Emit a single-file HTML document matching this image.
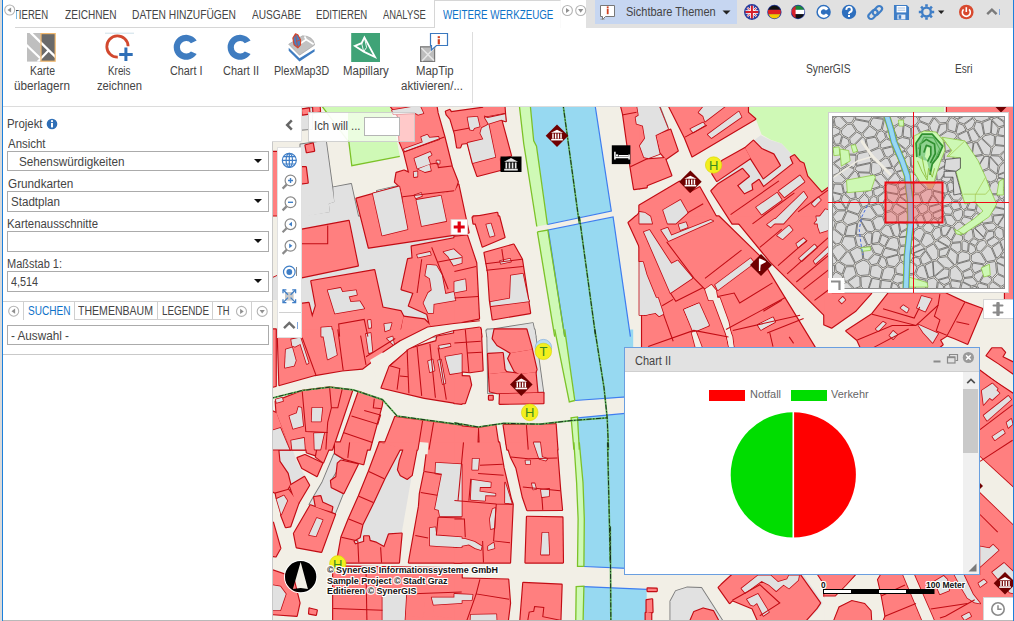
<!DOCTYPE html>
<html lang="de"><head><meta charset="utf-8"><title>WebOffice</title>
<style>
html,body{margin:0;padding:0;background:#fff;}
#app{position:relative;width:1014px;height:621px;overflow:hidden;background:#fff;font-family:"Liberation Sans",sans-serif;color:#444;}
#app div,#app span,#app svg{position:absolute;}
.t{white-space:nowrap;line-height:1;transform-origin:0 0;display:block;}
.box{border:1px solid #ababab;background:#fff;box-sizing:border-box;}
.arr{width:0;height:0;border-left:4px solid transparent;border-right:4px solid transparent;border-top:4px solid #111;}
.halo{text-shadow:-1px 0 0 #fff,1px 0 0 #fff,0 -1px 0 #fff,0 1px 0 #fff,-1px -1px 0 #fff,1px 1px 0 #fff,-1px 1px 0 #fff,1px -1px 0 #fff;}
</style></head><body>
<div id="app">
<div id="map" style="left:273px;top:107px;width:741px;height:514px;overflow:hidden;">
<svg class="mapsvg" style="left:0;top:0" width="741" height="514" viewBox="273 107 741 514">
<rect x="273" y="107" width="741" height="514" fill="#f2efe6"/>
<g fill="#e1e1e1" stroke="#7a7a7a" stroke-width="1.8" stroke-linejoin="round">
<polygon points="300.4,144.4 325.9,140.8 334.3,201.9 328.8,203.7 329.9,211.9 300.4,217.4"/>
<polygon points="333.2,187.3 351.1,184 359.7,223.6 300.4,223.6 300.4,216.5 329.9,211.9 328.8,203.7 334.3,201.9"/>
<polygon points="300.4,109.7 312.2,107.9 312.2,128.9 300.4,129.8"/>
<polygon points="377,190.8 396.5,186.3 401,205.8 377,205.8"/>
<polygon points="639.4,103.4 658.5,103.4 667.6,127.1 655.8,134.4 659.4,152.6 639.4,157.2"/>
<polygon points="300.4,216.4 461.7,216.4 461.7,336.6 300.4,336.6"/>
<polygon points="486.3,330.4 532.8,323.1 535.5,336.6 487.2,336.6"/>
<polygon points="487.2,329.4 534.6,329.4 543.4,393.2 488.1,393.2"/>
<polygon points="334.1,454.2 343.2,459.7 330.5,480.7 331.4,487.1 343.2,493.1 335,513.5 309.5,504.4 314.1,496.2 322.3,482.5"/>
<polygon points="670.4,624.9 670.4,601.2 675.8,591.1 686.8,587.5 701.4,588 725.1,624.9"/>
</g>
<g fill="#e1e1e1">
<polygon points="300.4,144.4 325.9,140.8 334.3,201.9 328.8,203.7 329.9,211.9 300.4,217.4"/>
<polygon points="333.2,187.3 351.1,184 359.7,223.6 300.4,223.6 300.4,216.5 329.9,211.9 328.8,203.7 334.3,201.9"/>
<polygon points="300.4,109.7 312.2,107.9 312.2,128.9 300.4,129.8"/>
<polygon points="377,190.8 396.5,186.3 401,205.8 377,205.8"/>
<polygon points="639.4,103.4 658.5,103.4 667.6,127.1 655.8,134.4 659.4,152.6 639.4,157.2"/>
<polygon points="300.4,216.4 461.7,216.4 461.7,336.6 300.4,336.6"/>
<polygon points="486.3,330.4 532.8,323.1 535.5,336.6 487.2,336.6"/>
<polygon points="487.2,329.4 534.6,329.4 543.4,393.2 488.1,393.2"/>
<polygon points="334.1,454.2 343.2,459.7 330.5,480.7 331.4,487.1 343.2,493.1 335,513.5 309.5,504.4 314.1,496.2 322.3,482.5"/>
<polygon points="670.4,624.9 670.4,601.2 675.8,591.1 686.8,587.5 701.4,588 725.1,624.9"/>
</g>
<g fill="#e1e1e1">
<polygon points="753.4,140.8 760.7,135.3 770.7,140.2 781.7,143.5 791.7,154.4 793.5,163.6 763.4,187.3 758.9,180 752.5,184.5 753.4,190 744.3,194.6 737,185.5 748.8,176.3 742.4,169 717.8,184.5 716.9,180.9 750.6,159 762.5,178.2 779.8,165.4 773.5,154.4 761.6,149"/>
<polygon points="278.5,442.4 290.3,442.4 296.7,461.5 304.9,476.1 290.3,484.3 287.6,473.4 279.4,461.5"/>
<polygon points="400.7,449.6 399.8,460.6 398,469.7 400.7,475.2 407.1,478.8 411.7,476.1 401.6,533.6 388.9,534.5 384.3,547.3 376.1,542.7 369.7,540.9 368.8,536.3 364.2,536.3 364.2,541.8 355.1,544.5 353.3,540.9 359.7,537.2 362.4,524.5 373.3,502.6 384.3,478.8"/>
<polygon points="741.5,589.3 759.8,574.7 803.6,574.7 822.7,603 819.1,608.5 803.6,624.9 759.8,624.9"/>
<polygon points="273,246 279,246 279,300 273,300"/>
</g>
<g fill="#97d9f1">
<polygon points="530.1,103.4 594.8,103.4 611.3,211 567.5,219.9 547.4,224.5 536.5,146.2 533.7,140.8"/>
<polygon points="548.3,230 613.1,216.9 630.4,336.6 564.7,336.6"/>
<polygon points="564.7,329.4 633.2,329.4 633.2,396.9 574.8,400.5"/>
<polygon points="577.5,417.8 633.2,412.7 633.2,449.6 579.3,449.6"/>
<polygon points="579.3,442.4 633.2,442.4 633.2,569 583.9,566.4 584.3,519 583,482.5"/>
<polygon points="583.9,586.6 646.7,589.3 646.7,624.9 583,624.9"/>
</g>
<g fill="#cff9b6">
<polygon points="319.9,103.4 348.9,142.2 351.8,165.7 399.8,156.3 389.8,103.4"/>
<polygon points="519.1,103.4 530.1,103.4 533.7,140.8 536.5,146.2 547.4,224.5 536.8,226.5 523.7,143.5"/>
<polygon points="747,103.4 880.2,103.4 880.2,183.6 821.8,192.8 807.2,176.3 803.6,163.6 792.6,155.3 781.7,143.5 770.7,139.8 761.6,134.4 756.1,119.8 747.9,112.5"/>
<polygon points="537.4,231.9 547.8,230 564.7,336.6 554.7,336.6"/>
<polygon points="554.7,329.4 564.7,329.4 574.8,400.5 569.3,402"/>
<polygon points="571.1,417.8 577.5,416.9 579.3,449.6 573.9,449.6"/>
<polygon points="573.9,442.4 579.3,442.4 583,482.5 584.3,519 583.9,566.4 577.5,566.4 578.1,519 576.6,482.5"/>
<polygon points="576.2,586.6 583.9,586.2 583,624.9 575.7,624.9"/>
<polygon points="828,100 944,100 944,113 828,113"/>
</g>
<g fill="none" stroke="#3f7df0" stroke-width="1.2">
<polyline points="594.8,103.4 611.3,211 547.4,224.5"/>
<polyline points="564.7,336.6 548.3,230 613.1,216.9 630.4,336.6"/>
<polyline points="574.8,400.5 633.2,396.3"/>
<polyline points="577.5,417.8 633.2,412.7"/>
<polyline points="583.9,566.5 633.2,568.7"/>
<polyline points="583.9,586.6 646.7,589.3"/>
</g>
<g fill="none" stroke="#7cc228" stroke-width="1.3">
<polyline points="519.1,103.4 523.7,143.5 536.8,226.5"/>
<polyline points="530.1,103.4 533.7,140.8 536.5,146.2 547.4,224.5"/>
<polyline points="537.4,231.9 554.7,336.6"/>
<polyline points="537.4,231.9 547.8,230 564.7,336.6"/>
<polyline points="554.7,329.4 569.3,402 574.8,400.5"/>
<polyline points="564.7,329.4 574.8,400.5"/>
<polyline points="573.9,449.6 571.1,417.8 577.5,416.9 579.3,449.6"/>
<polyline points="573.9,442.4 576.6,482.5 578.1,519 577.5,566.4 583.9,566.4"/>
<polyline points="579.3,442.4 583,482.5 584.3,519 583.9,566.4"/>
<polyline points="575.7,624.9 576.2,586.6 583.9,586.2 583,624.9"/>
<polyline points="319.9,103.4 348.9,142.2 351.8,165.7 399.8,156.3"/>
</g>
<g fill="#ff7f7f" stroke="#c20c14" stroke-width="2.3" stroke-linejoin="round">
<polygon points="305.5,145.3 312.8,143.5 314.1,150.8 306.8,152.2"/>
<polygon points="300.4,167.2 305.8,167.2 307.7,182.7 300.4,183.6"/>
<polygon points="389,104 436.1,104 437.6,113 444.4,136.9 451.9,166.9 457.8,181.9 454.9,190.8 403.4,203.6 402.5,196.8 399.5,186.3 395,181.9 396.5,172.9 404,170.6 409.2,172.9 404,151.9 399.5,141.4 398,116"/>
<polygon points="445.9,111.5 449.6,110 451.1,112.2 483.3,107.7 481.8,104 504.3,104 505,113.7 505.7,121.2 501.3,119.7 511,155.7 499.8,158.6 500.5,169.9 477.3,175.9 472.8,163.1 467.6,142.9 461.6,143.7 460.1,147.4 457.1,147.4 454.9,133.9 450.4,119 446.6,114.5"/>
<polygon points="620.4,103.4 646.7,103.4 646.7,167.2 630.4,166.3 634.1,189.1 646.7,187.3 646.7,167.2 630.4,166.3 623.1,114.3"/>
<polygon points="629.5,223.6 646.7,205.5 646.7,223.6"/>
<polygon points="473.5,223.6 472.6,217.4 497.2,212.8 499.1,223.6"/>
<polygon points="454.4,209.2 458.9,209.2 460.7,223.6 454.4,223.6"/>
<polygon points="667.6,103.4 747.9,103.4 747.9,112.5 755.2,118.9 692.3,156.3 685,138 674,116.1"/>
<polygon points="655.8,135.3 670.4,129.8 677.7,150.8 665.8,159 660.3,152.6"/>
<polygon points="639.4,125.2 644.8,127.1 645.7,140.8 639.4,141.7"/>
<polygon points="639.4,159.9 664.9,158.1 671.3,175.4 639.4,188.2"/>
<polygon points="712.3,173.6 722.4,160.8 745.2,148.1 750.6,158.1 716.9,180.9"/>
<polygon points="745.2,148.1 753.4,140.8 761.6,149 773.5,154.4 779.8,165.4 763.4,178.2 750.6,158.1"/>
<polygon points="711.4,190.9 717.8,184.5 742.4,169 748.8,176.3 737,185.5 744.3,194.6 753.4,190 752.5,184.5 758.9,180 763.4,187.3 793.5,163.6 790.8,157.2 794.4,155.3 799.9,161.7 803.6,163.6 807.2,176.3 821.8,192.8 831.7,185.5 831.7,223.6 732.4,223.6"/>
<polygon points="639.4,205.5 679.5,181.8 689.5,192.8 699.6,187.3 716,216.5 720.5,223.6 639.4,223.6"/>
<polygon points="300.4,230 348.7,220.9 357.8,265.6 300.4,277.5"/>
<polygon points="311.3,281.1 374.3,270.2 382.5,307.6 400.7,311.2 403.5,316.7 398.9,336.6 300.4,336.6 300.4,303.9 308.6,303 312.2,317.6 315.9,305.8"/>
<polygon points="411.7,246.5 461.7,236.8 461.7,324 433.6,329.5 429.9,324.9 427.2,314 408.9,305.8 413.5,293 401.6,289.3 408,259.2 412.6,258.3"/>
<polygon points="403.5,316.7 424.4,319.4 429.9,324.9 433.6,329.5 461.7,324 461.7,324.9 415.3,334.6 414.4,340.4 398.9,340.4"/>
<polygon points="473.5,216.4 499.1,216.4 504.5,237.3 482.6,246.5"/>
<polygon points="484.5,252.8 513.6,244.6 521.9,259.2 530.1,313 492.7,319.4 489.9,300.3 488.1,272.9"/>
<polygon points="454.4,236.8 467.1,235.5 476.2,262.9 479,318.5 454.4,323.6"/>
<polygon points="454.4,330 479.9,325.8 481.4,336.6 454.4,336.6"/>
<polygon points="628.6,222.7 635.9,216.4 646.7,216.4 646.7,262"/>
<polygon points="639.4,216.4 718.7,216.4 759.8,256.5 769.3,272.9 817.2,351.4 642.1,351.4 642.1,314.9 643,262.3 639.4,261.1"/>
<polygon points="733.3,216.4 831.7,216.4 831.7,322.2 770.7,262"/>
<polygon points="824.3,293.3 871.1,293.3 855.5,310.7 831.7,327.6 824.3,324.4"/>
<polygon points="888.5,293.3 945.4,293.3 964.7,302.4 982.1,308.8 967.4,343.7 954.6,338.2 947.2,335.4 939.9,340 942.6,344.6 938.1,348.3 861,348.3 857.3,340 846.3,330.9 872,314.3"/>
<polygon points="986.7,355.6 992.2,348.3 1001.3,348.3 1005,352.5 1002.3,356.9 1017.7,364.8 1017.7,376.7 999.5,363.9"/>
<polygon points="980.2,372.1 1017.7,396.9 1017.7,413.4 980.2,413.4"/>
<polygon points="1009.6,281.3 1017.7,281.3 1017.7,288.7 1009.6,288.7"/>
<polygon points="279.4,385 277.6,329.4 302.2,329.4 414.4,329.4 382.5,353.1 362.4,368.6 342.3,370.4 315,375"/>
<polygon points="269.4,329.4 275.7,329.4 275.7,385.9 269.4,387.7"/>
<polygon points="389.8,365.8 407.1,349.4 436.3,341.2 437.2,336.6 461.7,332.1 461.7,403.8 424.4,397.8 381.6,387.7"/>
<polygon points="275.7,401.4 302.2,391 329.6,387.4 352.2,390.3 332.1,449.6 290.3,449.6 276.6,413.3"/>
<polygon points="269.4,409.6 276.6,413.3 290.3,449.6 269.4,449.6"/>
<polygon points="358.6,391.9 382.5,400.5 381.6,406 369.7,449.6 338.1,449.6"/>
<polygon points="395.2,416.9 461.7,425.7 461.7,449.6 382.5,449.6"/>
<polygon points="492.7,338.5 494.5,329.4 526.4,329.4 531,345.8 531.9,349.4 510.9,353.1 506.3,350.3 497.2,344.9"/>
<polygon points="508.2,358.5 510.9,353.1 531.9,349.4 536.5,369.5 535.5,372.2 519.1,374.1 514.6,371.3"/>
<polygon points="488.1,354 502.7,353.1 504.5,369.5 506.3,372.2 489,374.1"/>
<polygon points="489,374.1 506.3,372.2 513.6,373.1 519.1,374.1 535.5,372.2 537.4,392.3 497.2,393.2 489.9,391.4"/>
<polygon points="500,394.1 543.4,392.8 543.4,403.2 499.6,403.8"/>
<polygon points="489,395.9 492.7,395.9 492.7,399.6 489,399.6"/>
<polygon points="454.4,329.4 480.8,329.4 482.6,370.4 469.9,372.2 460.7,371.3 454.4,360.4"/>
<polygon points="454.4,375.9 469.3,376.4 471.1,385 464.9,403.2 454.4,403.2"/>
<polygon points="454.4,425.7 478.1,427.9 477.2,449.6 454.4,449.6"/>
<polygon points="479,427.9 495.4,425.1 499.1,449.6 479.9,449.6"/>
<polygon points="503.6,425.1 526.4,425.1 555.6,424.2 557.4,449.6 507.3,449.6"/>
<polygon points="269.4,442.4 277.6,442.4 279.4,461.5 287.6,473.4 290.3,484.3 287.6,488.9 274.8,492.5 269.4,489.8"/>
<polygon points="297.6,457.9 304.9,455.1 322.3,463.3 316.8,476.1 302.2,467.9"/>
<polygon points="305.8,442.4 317.7,442.4 315,455.1 306.8,452.4"/>
<polygon points="318.6,442.4 331.4,442.4 323.2,462.4 315.9,456.9"/>
<polygon points="289.8,485.8 304.4,477 309.1,485.2 298.5,502.9 294.5,498.9"/>
<polygon points="275.7,493.4 288.5,489.8 298.5,502.9 290.3,526.3 285.8,527.2 281.2,515.3 286.7,500.7 283.9,495.3 276.6,498"/>
<polygon points="269.4,522.6 273,522.6 280.3,548.2 275.7,556.4 269.4,555.5"/>
<polygon points="314.1,497.1 320.4,496.2 322.3,502.6 332.3,507.1 331.4,511.7 315.9,507.1"/>
<polygon points="310.4,505.3 335,514.4 321.3,551.8 296.7,547.3 294,533.6"/>
<polygon points="335,442.4 368.8,442.4 363.3,464.2 344.2,458.8 335,453.3"/>
<polygon points="340.9,460.6 357.8,464.2 343.6,493.1 331.7,487.2 331,480.7 336.3,477 337.8,463.3"/>
<polygon points="379.7,442.4 400.7,447.8 384.3,478.8 373.3,502.6 362.4,524.5 359.7,537.2 353.3,540.9 355.1,544.5 364.2,541.8 364.2,536.3 368.8,536.3 369.7,540.9 376.1,542.7 384.3,547.3 388.9,534.5 401.6,533.6 398.9,562.6 336.9,562.6 341.4,537.2 348.7,519 358.8,496.2 368.8,471.5"/>
<polygon points="379.7,442.4 418,442.4 411.7,475.2 407.1,478.8 400.7,475.2 398,469.7 399.8,460.6 403.5,449.6 400.7,447.8"/>
<polygon points="428.1,442.4 461.7,442.4 461.7,562.6 408.9,562.6 419,506.2 419.9,493.4 424.4,471.5"/>
<polygon points="452.7,468.8 461.7,468.8 461.7,497.1 451.8,495.3"/>
<polygon points="454.4,442.4 499.1,442.4 503.6,467.9 510.9,498.9 512.7,504.4 510,562.6 454.4,562.6"/>
<polygon points="506.3,442.4 556.5,442.4 560.2,490.7 562,509.9 527.3,510.2 522.8,497.1 516.4,467.9 510.9,456.9"/>
<polygon points="527,516.8 562.4,517.5 562.9,562.6 525.5,562.6"/>
<polygon points="333.2,566.5 461.7,568.3 461.7,624.9 333.2,624.9"/>
<polygon points="269.4,569.2 293.1,577.4 299.5,603 296.7,615.8 269.4,613.9"/>
<polygon points="309.5,608.5 316.8,610.3 315.9,614.8 309.1,613.6"/>
<polygon points="407.1,598.4 425.3,599 423.5,617.6 404.4,615.8"/>
<polygon points="433.6,605.7 461.7,603.9 461.7,617.6 432.6,616.7"/>
<polygon points="454.4,578.3 508.2,579.6 510,603 507.3,624.9 454.4,624.9"/>
<polygon points="523.3,582.9 561.6,584.7 560.2,624.9 520,624.9"/>
<polygon points="688.6,624.9 694.1,612.1 703.2,608.5 713.2,611.2 720.5,624.9"/>
<polygon points="647.6,588.4 656.7,588.7 656.7,591.1 647.6,591.1"/>
<polygon points="646.6,600.2 652.1,599.3 652.5,612.1 646.6,613"/>
<polygon points="645.7,613 651.2,613 651.2,624.9 645.7,624.9"/>
<polygon points="721.5,584.7 732.4,574.7 799.9,574.7 820,603 816.3,608.5 801.7,624.9 759.8,624.9 752.5,608.5 732.4,600.2 729.7,603 718.7,587.5"/>
<polygon points="818.2,574.7 831.7,574.7 831.7,584.7 823.6,582.9"/>
<polygon points="880.3,574.9 1017.7,574.9 1017.7,625.4 881.2,625.4 884.9,616.2 881.2,596 877.5,579.5"/>
<polygon points="831.7,625.4 839,607 851.8,600.6 864.7,603.4 871.1,610.7 872,625.4"/>
<polygon points="824.3,574.9 855.5,574.9 846.3,585 835.3,596 824.3,596"/>
<polygon points="980.2,493.3 1017.7,493.3 1017.7,574.9 980.2,574.9"/>
<polygon points="978.2,369.4 1016.1,397.7 1016.1,549.9 978.2,549.9"/>
<polygon points="273,152 279,152 279,246 273,246"/>
<polygon points="947,100 1020,100 1020,300 1005,300 1005,113 947,113"/>
<polygon points="356.5,198.7 399.3,186.5 403.4,202.8 455.2,190.5 458.4,184.4 468.6,232.5 368.8,247.6"/>
<polygon points="302,109.5 309,108.5 309.5,113.5 302.5,114.5"/>
<polygon points="313,105 319.5,105 320,111.5 313.5,112.5"/>
</g>
<g fill="#ff7f7f">
<polygon points="305.5,145.3 312.8,143.5 314.1,150.8 306.8,152.2"/>
<polygon points="300.4,167.2 305.8,167.2 307.7,182.7 300.4,183.6"/>
<polygon points="389,104 436.1,104 437.6,113 444.4,136.9 451.9,166.9 457.8,181.9 454.9,190.8 403.4,203.6 402.5,196.8 399.5,186.3 395,181.9 396.5,172.9 404,170.6 409.2,172.9 404,151.9 399.5,141.4 398,116"/>
<polygon points="445.9,111.5 449.6,110 451.1,112.2 483.3,107.7 481.8,104 504.3,104 505,113.7 505.7,121.2 501.3,119.7 511,155.7 499.8,158.6 500.5,169.9 477.3,175.9 472.8,163.1 467.6,142.9 461.6,143.7 460.1,147.4 457.1,147.4 454.9,133.9 450.4,119 446.6,114.5"/>
<polygon points="620.4,103.4 646.7,103.4 646.7,167.2 630.4,166.3 634.1,189.1 646.7,187.3 646.7,167.2 630.4,166.3 623.1,114.3"/>
<polygon points="629.5,223.6 646.7,205.5 646.7,223.6"/>
<polygon points="473.5,223.6 472.6,217.4 497.2,212.8 499.1,223.6"/>
<polygon points="454.4,209.2 458.9,209.2 460.7,223.6 454.4,223.6"/>
<polygon points="667.6,103.4 747.9,103.4 747.9,112.5 755.2,118.9 692.3,156.3 685,138 674,116.1"/>
<polygon points="655.8,135.3 670.4,129.8 677.7,150.8 665.8,159 660.3,152.6"/>
<polygon points="639.4,125.2 644.8,127.1 645.7,140.8 639.4,141.7"/>
<polygon points="639.4,159.9 664.9,158.1 671.3,175.4 639.4,188.2"/>
<polygon points="712.3,173.6 722.4,160.8 745.2,148.1 750.6,158.1 716.9,180.9"/>
<polygon points="745.2,148.1 753.4,140.8 761.6,149 773.5,154.4 779.8,165.4 763.4,178.2 750.6,158.1"/>
<polygon points="711.4,190.9 717.8,184.5 742.4,169 748.8,176.3 737,185.5 744.3,194.6 753.4,190 752.5,184.5 758.9,180 763.4,187.3 793.5,163.6 790.8,157.2 794.4,155.3 799.9,161.7 803.6,163.6 807.2,176.3 821.8,192.8 831.7,185.5 831.7,223.6 732.4,223.6"/>
<polygon points="639.4,205.5 679.5,181.8 689.5,192.8 699.6,187.3 716,216.5 720.5,223.6 639.4,223.6"/>
<polygon points="300.4,230 348.7,220.9 357.8,265.6 300.4,277.5"/>
<polygon points="311.3,281.1 374.3,270.2 382.5,307.6 400.7,311.2 403.5,316.7 398.9,336.6 300.4,336.6 300.4,303.9 308.6,303 312.2,317.6 315.9,305.8"/>
<polygon points="411.7,246.5 461.7,236.8 461.7,324 433.6,329.5 429.9,324.9 427.2,314 408.9,305.8 413.5,293 401.6,289.3 408,259.2 412.6,258.3"/>
<polygon points="403.5,316.7 424.4,319.4 429.9,324.9 433.6,329.5 461.7,324 461.7,324.9 415.3,334.6 414.4,340.4 398.9,340.4"/>
<polygon points="473.5,216.4 499.1,216.4 504.5,237.3 482.6,246.5"/>
<polygon points="484.5,252.8 513.6,244.6 521.9,259.2 530.1,313 492.7,319.4 489.9,300.3 488.1,272.9"/>
<polygon points="454.4,236.8 467.1,235.5 476.2,262.9 479,318.5 454.4,323.6"/>
<polygon points="454.4,330 479.9,325.8 481.4,336.6 454.4,336.6"/>
<polygon points="628.6,222.7 635.9,216.4 646.7,216.4 646.7,262"/>
<polygon points="639.4,216.4 718.7,216.4 759.8,256.5 769.3,272.9 817.2,351.4 642.1,351.4 642.1,314.9 643,262.3 639.4,261.1"/>
<polygon points="733.3,216.4 831.7,216.4 831.7,322.2 770.7,262"/>
<polygon points="824.3,293.3 871.1,293.3 855.5,310.7 831.7,327.6 824.3,324.4"/>
<polygon points="888.5,293.3 945.4,293.3 964.7,302.4 982.1,308.8 967.4,343.7 954.6,338.2 947.2,335.4 939.9,340 942.6,344.6 938.1,348.3 861,348.3 857.3,340 846.3,330.9 872,314.3"/>
<polygon points="986.7,355.6 992.2,348.3 1001.3,348.3 1005,352.5 1002.3,356.9 1017.7,364.8 1017.7,376.7 999.5,363.9"/>
<polygon points="980.2,372.1 1017.7,396.9 1017.7,413.4 980.2,413.4"/>
<polygon points="1009.6,281.3 1017.7,281.3 1017.7,288.7 1009.6,288.7"/>
<polygon points="279.4,385 277.6,329.4 302.2,329.4 414.4,329.4 382.5,353.1 362.4,368.6 342.3,370.4 315,375"/>
<polygon points="269.4,329.4 275.7,329.4 275.7,385.9 269.4,387.7"/>
<polygon points="389.8,365.8 407.1,349.4 436.3,341.2 437.2,336.6 461.7,332.1 461.7,403.8 424.4,397.8 381.6,387.7"/>
<polygon points="275.7,401.4 302.2,391 329.6,387.4 352.2,390.3 332.1,449.6 290.3,449.6 276.6,413.3"/>
<polygon points="269.4,409.6 276.6,413.3 290.3,449.6 269.4,449.6"/>
<polygon points="358.6,391.9 382.5,400.5 381.6,406 369.7,449.6 338.1,449.6"/>
<polygon points="395.2,416.9 461.7,425.7 461.7,449.6 382.5,449.6"/>
<polygon points="492.7,338.5 494.5,329.4 526.4,329.4 531,345.8 531.9,349.4 510.9,353.1 506.3,350.3 497.2,344.9"/>
<polygon points="508.2,358.5 510.9,353.1 531.9,349.4 536.5,369.5 535.5,372.2 519.1,374.1 514.6,371.3"/>
<polygon points="488.1,354 502.7,353.1 504.5,369.5 506.3,372.2 489,374.1"/>
<polygon points="489,374.1 506.3,372.2 513.6,373.1 519.1,374.1 535.5,372.2 537.4,392.3 497.2,393.2 489.9,391.4"/>
<polygon points="500,394.1 543.4,392.8 543.4,403.2 499.6,403.8"/>
<polygon points="489,395.9 492.7,395.9 492.7,399.6 489,399.6"/>
<polygon points="454.4,329.4 480.8,329.4 482.6,370.4 469.9,372.2 460.7,371.3 454.4,360.4"/>
<polygon points="454.4,375.9 469.3,376.4 471.1,385 464.9,403.2 454.4,403.2"/>
<polygon points="454.4,425.7 478.1,427.9 477.2,449.6 454.4,449.6"/>
<polygon points="479,427.9 495.4,425.1 499.1,449.6 479.9,449.6"/>
<polygon points="503.6,425.1 526.4,425.1 555.6,424.2 557.4,449.6 507.3,449.6"/>
<polygon points="269.4,442.4 277.6,442.4 279.4,461.5 287.6,473.4 290.3,484.3 287.6,488.9 274.8,492.5 269.4,489.8"/>
<polygon points="297.6,457.9 304.9,455.1 322.3,463.3 316.8,476.1 302.2,467.9"/>
<polygon points="305.8,442.4 317.7,442.4 315,455.1 306.8,452.4"/>
<polygon points="318.6,442.4 331.4,442.4 323.2,462.4 315.9,456.9"/>
<polygon points="289.8,485.8 304.4,477 309.1,485.2 298.5,502.9 294.5,498.9"/>
<polygon points="275.7,493.4 288.5,489.8 298.5,502.9 290.3,526.3 285.8,527.2 281.2,515.3 286.7,500.7 283.9,495.3 276.6,498"/>
<polygon points="269.4,522.6 273,522.6 280.3,548.2 275.7,556.4 269.4,555.5"/>
<polygon points="314.1,497.1 320.4,496.2 322.3,502.6 332.3,507.1 331.4,511.7 315.9,507.1"/>
<polygon points="310.4,505.3 335,514.4 321.3,551.8 296.7,547.3 294,533.6"/>
<polygon points="335,442.4 368.8,442.4 363.3,464.2 344.2,458.8 335,453.3"/>
<polygon points="340.9,460.6 357.8,464.2 343.6,493.1 331.7,487.2 331,480.7 336.3,477 337.8,463.3"/>
<polygon points="379.7,442.4 400.7,447.8 384.3,478.8 373.3,502.6 362.4,524.5 359.7,537.2 353.3,540.9 355.1,544.5 364.2,541.8 364.2,536.3 368.8,536.3 369.7,540.9 376.1,542.7 384.3,547.3 388.9,534.5 401.6,533.6 398.9,562.6 336.9,562.6 341.4,537.2 348.7,519 358.8,496.2 368.8,471.5"/>
<polygon points="379.7,442.4 418,442.4 411.7,475.2 407.1,478.8 400.7,475.2 398,469.7 399.8,460.6 403.5,449.6 400.7,447.8"/>
<polygon points="428.1,442.4 461.7,442.4 461.7,562.6 408.9,562.6 419,506.2 419.9,493.4 424.4,471.5"/>
<polygon points="452.7,468.8 461.7,468.8 461.7,497.1 451.8,495.3"/>
<polygon points="454.4,442.4 499.1,442.4 503.6,467.9 510.9,498.9 512.7,504.4 510,562.6 454.4,562.6"/>
<polygon points="506.3,442.4 556.5,442.4 560.2,490.7 562,509.9 527.3,510.2 522.8,497.1 516.4,467.9 510.9,456.9"/>
<polygon points="527,516.8 562.4,517.5 562.9,562.6 525.5,562.6"/>
<polygon points="333.2,566.5 461.7,568.3 461.7,624.9 333.2,624.9"/>
<polygon points="269.4,569.2 293.1,577.4 299.5,603 296.7,615.8 269.4,613.9"/>
<polygon points="309.5,608.5 316.8,610.3 315.9,614.8 309.1,613.6"/>
<polygon points="407.1,598.4 425.3,599 423.5,617.6 404.4,615.8"/>
<polygon points="433.6,605.7 461.7,603.9 461.7,617.6 432.6,616.7"/>
<polygon points="454.4,578.3 508.2,579.6 510,603 507.3,624.9 454.4,624.9"/>
<polygon points="523.3,582.9 561.6,584.7 560.2,624.9 520,624.9"/>
<polygon points="688.6,624.9 694.1,612.1 703.2,608.5 713.2,611.2 720.5,624.9"/>
<polygon points="647.6,588.4 656.7,588.7 656.7,591.1 647.6,591.1"/>
<polygon points="646.6,600.2 652.1,599.3 652.5,612.1 646.6,613"/>
<polygon points="645.7,613 651.2,613 651.2,624.9 645.7,624.9"/>
<polygon points="721.5,584.7 732.4,574.7 799.9,574.7 820,603 816.3,608.5 801.7,624.9 759.8,624.9 752.5,608.5 732.4,600.2 729.7,603 718.7,587.5"/>
<polygon points="818.2,574.7 831.7,574.7 831.7,584.7 823.6,582.9"/>
<polygon points="880.3,574.9 1017.7,574.9 1017.7,625.4 881.2,625.4 884.9,616.2 881.2,596 877.5,579.5"/>
<polygon points="831.7,625.4 839,607 851.8,600.6 864.7,603.4 871.1,610.7 872,625.4"/>
<polygon points="824.3,574.9 855.5,574.9 846.3,585 835.3,596 824.3,596"/>
<polygon points="980.2,493.3 1017.7,493.3 1017.7,574.9 980.2,574.9"/>
<polygon points="978.2,369.4 1016.1,397.7 1016.1,549.9 978.2,549.9"/>
<polygon points="273,152 279,152 279,246 273,246"/>
<polygon points="947,100 1020,100 1020,300 1005,300 1005,113 947,113"/>
<polygon points="356.5,198.7 399.3,186.5 403.4,202.8 455.2,190.5 458.4,184.4 468.6,232.5 368.8,247.6"/>
<polygon points="302,109.5 309,108.5 309.5,113.5 302.5,114.5"/>
<polygon points="313,105 319.5,105 320,111.5 313.5,112.5"/>
</g>
<g fill="#e1e1e1" stroke="#c20c14" stroke-width="1.6" stroke-linejoin="round">
<polygon points="392,110.3 419.7,105.5 423.4,113.3 418.2,114.8 415.6,113.3 393.5,114.2"/>
<polygon points="421.2,136.9 427.2,134.7 429.4,137.7 438.4,136.9 439.1,139.2 404.7,151.2 404,148.9 422.7,142.2"/>
<polygon points="414.4,158.6 430.1,151.9 431.6,154.9 427.9,157.1 430.1,163.9 417.4,168.4"/>
<polygon points="418.2,169.1 429.4,164.6 430.9,170.6 424.9,172.1 420.4,169.9"/>
<polygon points="413.7,172.1 417.4,171.4 417.4,176.6 414.1,177.1"/>
<polygon points="436.6,160.6 439.6,160.6 439.6,163.6 436.6,163.6"/>
<polygon points="414.4,195.3 421.2,193.1 421.9,196.1 415.9,198.3"/>
<polygon points="467.6,117.5 477.3,116.7 479.6,126.5 474.3,128 472.8,130.2 469.8,129.5"/>
<polygon points="484.8,117.5 505,113.7 505.7,121.2 501.3,119.7 488.5,123.8"/>
<polygon points="467.6,142.9 483.3,139.2 480.3,133.2 481.8,128 486.3,125.7 488.5,124.2 495.3,157.1 472.8,163.1"/>
<polygon points="698.6,112.5 705.9,103.4 728.8,103.4 705,121.6 703.2,116.1"/>
<polygon points="690.4,128.9 703.2,122.5 705,125.2 693.2,132.5"/>
<polygon points="707.8,134.4 738.8,111.6 741.5,117 711.4,138"/>
<polygon points="778.9,190.9 799.9,175.4 804.5,181.8 784.4,197.3"/>
<polygon points="756.1,207.3 777.1,192.8 781.7,200 761.6,214.6"/>
<polygon points="776.2,218.3 803.6,191.8 807.2,197.3 783.5,223.6 773.5,223.6"/>
<polygon points="811.8,203.7 818.2,197.3 820.9,200 814.5,206.4"/>
<polygon points="814.5,223.6 825.4,209.2 831.7,211 831.7,223.6"/>
<polygon points="663.1,210.1 680.4,200 687.7,212.8 675.8,223.6 667.6,223.6"/>
<polygon points="639.4,211.9 644.8,212.8 650.3,216.5 652.1,223.6 639.4,223.6"/>
<polygon points="327.7,290.2 340.5,287.9 342.3,292.1 356,290.2 356.9,294.8 348.7,296.6 350.5,302.1 359.7,301.2 364.2,308.5 335,313.4"/>
<polygon points="321.3,327.6 331.4,326.7 332.3,336.6 321.3,336.6"/>
<polygon points="384.3,324 391.6,323.1 389.8,329.5 385.2,331.3"/>
<polygon points="367.9,320.3 370.6,320 371.2,327.6 368.8,328"/>
<polygon points="427.2,264.7 436.3,265.6 441.8,274.7 445.4,293.9 453.6,292.1 455.4,300.3 433.6,303.9 433.2,313 428.1,313 423.5,303 428.1,293 431.7,290.2 429.9,278.4 425.3,275.6"/>
<polygon points="443.6,251.9 453.6,249.2 461.7,256.5 461.7,262.9 453.6,265.6 448.2,256.5"/>
<polygon points="417.1,254.7 429.9,251.9 430.8,254.7 418,257.4"/>
<polygon points="486.3,224.6 490.8,223.6 494.5,235.5 489.9,236.8"/>
<polygon points="510.9,275.6 522.8,273.8 528.2,299.4 529.2,301.2 490.8,306.1 490.5,302.1 510,298.5"/>
<polygon points="500,261.1 510,258.7 510.9,261.6 500.9,263.8"/>
<polygon points="454.4,281.7 465.3,279.3 466.2,290.2 454.4,292.4"/>
<polygon points="643.9,231.9 649.4,230 671.3,263.8 677.7,260.5 692.6,278 670.4,293"/>
<polygon points="639.4,262 643,262 646.6,274.7 662.2,313 659.4,315.8 655.8,313 644.8,314.9 639.4,314.9"/>
<polygon points="684.1,309.4 698.6,303.6 708.7,325.8 693.2,332.2"/>
<polygon points="715.1,284.8 750.6,258.3 754.3,262.9 717.8,290.2"/>
<polygon points="661.2,230 667.6,227.7 671.3,235.5 710.5,220 713.2,220.9 668.5,241"/>
<polygon points="678.6,224.6 685.9,222.2 687.7,227.3 680.4,230"/>
<polygon points="669.5,216.4 676.8,216.4 673.1,222.7"/>
<polygon points="767.1,224.6 774.4,219.1 778.9,219.1 770.7,227.3"/>
<polygon points="777.1,235.5 789,225.5 792.6,230 782.6,239.2"/>
<polygon points="796.3,243.7 803.6,238.2 806.3,241 798.1,247.4"/>
<polygon points="799,258.3 814.5,244.6 817.2,247.4 801.7,261.1"/>
<polygon points="813.6,261.1 831.7,243.7 831.7,249.2 815.4,263.8"/>
<polygon points="816.3,216.4 831.7,216.4 831.7,229.1 820,232.8 818.2,227.3"/>
<polygon points="757.9,324.9 772.5,317.6 774.7,322.2 760.7,329.5"/>
<polygon points="839,300.6 842.7,296.9 845.4,299.7 841.8,303.3"/>
<polygon points="921.6,296 931.6,298.8 925.2,311.6 917,307.9"/>
<polygon points="900.5,307.9 903.2,305.2 908.7,308.8 906.9,312.5"/>
<polygon points="875.7,329 883,321.7 885.8,323.5 878.4,331.2"/>
<polygon points="889.4,335.4 893.1,330.9 897.3,334.5 893.1,339.1"/>
<polygon points="917.9,324.4 938.1,333.6 932.6,342.8 923.4,332.7"/>
<polygon points="985.8,395.1 994,387.7 999.5,393.2 992.2,399.8"/>
<polygon points="285.8,349.4 292.2,347.6 295.8,360.4 294,365.8 284.9,367.7"/>
<polygon points="291.2,339.4 300.4,337.6 308.6,363.1 306.8,364 300.4,343.9 294.9,346.7 292.2,345.8"/>
<polygon points="322.3,329.4 332.3,329.4 336.9,354.9 327.7,359.5"/>
<polygon points="366,333.9 370.6,333 372.4,352.2 368.8,353.1"/>
<polygon points="387,338.5 392.5,336.6 394.3,345.8"/>
<polygon points="445.4,356.7 461.7,354 461.7,372.2 450,374.1"/>
<polygon points="438.1,360.4 440.9,359.5 445.4,383.2 442.7,384.1"/>
<polygon points="428.1,361.3 432.6,359.5 434.5,370.4 429.9,372.2"/>
<polygon points="439,345.8 450,343.9 450.5,346.1 439.9,348.5"/>
<polygon points="289.4,416 296.7,413.3 298.5,406.9 301.3,407.8 303.1,426 293.1,428.8"/>
<polygon points="312.2,407.8 322.3,407.8 320.8,421.5 311.7,421.5"/>
<polygon points="314.1,433.3 324.1,433 320.4,449.6 314.6,449.6"/>
<polygon points="291.2,440.6 304,437.9 304.9,449.6 292.2,449.6"/>
<polygon points="269.4,431.5 280.3,427.9 289.4,449.6 269.4,449.6"/>
<polygon points="275.7,399.6 282.1,397.8 283,400.9 276.6,402.7"/>
<polygon points="643.9,297.8 658,297.8 663.4,314.1 659.1,316.3 654.7,311.9 645,315.2"/>
<polygon points="684,309.8 699.2,303.3 709,325 693.8,331.5"/>
<polygon points="757.8,325 773,317.4 775.1,321.7 761,329.9"/>
<polygon points="276.6,498.9 283.9,495.6 287.2,500.7 281.2,514.4"/>
<polygon points="316.8,518.1 322.6,519.9 315.9,536.3 309.1,535"/>
<polygon points="435.9,462.8 461.7,464.2 461.7,516.2 439.9,516.2 438.7,509.9 435,508.9 441.8,474.3 435.4,473.4"/>
<polygon points="429.9,528.1 435.4,527.2 436.3,535.4 461.7,537.2 461.7,547.3 439.9,546.3 429.9,545.4"/>
<polygon points="472.6,458.8 479,458.8 478.1,469.7 472.2,469.7"/>
<polygon points="471.7,479.8 490.8,482.5 490.5,487.1 479.9,487.1 479.5,491.6 495.4,493.8 495.4,495.6 485.4,495.3 485,500.7 470.8,499.8"/>
<polygon points="505.1,482.5 511.8,503.5 505.1,502.9"/>
<polygon points="492.7,508.9 495.4,508 494.5,528.1 490.8,529 489.9,519"/>
<polygon points="454.4,538.1 465.3,539 474.4,541.8 481.7,546.3 480.8,550 475.3,548.2 468.9,544.5 454.4,547.3"/>
<polygon points="488.1,546.3 493.6,542.7 494.5,548.2 488.1,550"/>
<polygon points="533.7,442.4 540.1,442.4 541.9,456.9 547.4,458.8 545.6,460.6 539.2,458.8"/>
<polygon points="525.5,460.6 530.1,460.6 530.1,464.2 525.9,463.9"/>
<polygon points="541,489.8 549.2,488.9 548.9,496.2 541.9,497.1"/>
<polygon points="531.9,483.4 534.6,483.4 536.1,488.9 533.2,489.4"/>
<polygon points="542.3,532.7 548.3,532.7 549.2,554.6 541,554.6"/>
<polygon points="382.5,593.9 406.2,593.9 404.4,624.9 382.5,624.9"/>
<polygon points="431.7,597.5 461.7,597.5 461.7,603 433.6,604.8"/>
<polygon points="269.4,584.7 280.3,586.6 285.8,593.9 280.3,610.3 269.4,610.3"/>
<polygon points="454.4,593.9 472.6,594.8 471.7,600.2 454.4,600.2"/>
<polygon points="470.8,614.8 496.3,614.3 496.7,624.9 470.4,624.9"/>
<polygon points="741.5,588.4 757.9,575.6 770.7,575.6 778,582 787.1,579.3 789,575.6 799,575.6 798.1,580.2 789,588.4 783.5,584.7 776.2,591.1 768.9,584.7 761.6,581.1 745.2,592.9"/>
<polygon points="747,599.3 757.9,593.9 768.9,612.1 763.4,615.8 757,603 753.4,605.7 750.6,604.8"/>
<polygon points="934.4,581.4 943.6,575.9 947.2,579.5 949.1,590.5 939.9,594.2"/>
<polygon points="954.6,574.9 963.7,574.9 972.9,594.2 980.2,603.4 974.7,602.5 967.4,597.9 961.9,588.7"/>
<polygon points="980.2,546.5 989.4,548.3 993.1,544.7 998.6,550.2 980.2,566.7"/>
<polygon points="992.2,572.2 1004.1,563 1017.7,575.9 1017.7,594.2 1009.6,592.4 1000.4,581.4 996.8,577.7"/>
<polygon points="978.4,583.2 983.9,579.5 986.7,582.3 980.2,586.9"/>
<polygon points="961.9,616.2 969.2,612.5 971.1,616.2 964.7,619.9"/>
<polygon points="981.8,390.6 992.4,383.5 997.7,388.8 983.6,404.8"/>
<polygon points="983.6,415.4 1008.3,395.9 1011.2,399.5 987.1,420.7"/>
<polygon points="992.4,436.6 1003,429.6 1004.8,433.1 994.9,440.2"/>
<polygon points="1006.6,422.5 1011.2,418.9 1012.6,424.2 1008.3,427.8"/>
<polygon points="372.8,193.4 399.3,186.5 407.5,229.2 382.2,235.4"/>
<polygon points="416.4,199.9 440.9,195.8 446.2,221.1 421.7,226"/>
<polygon points="636.6,102.8 657.6,102.8 668.1,129 655.5,135.3 659.7,154.1 648.2,158.3 644,157.3 639.8,145.7 645,138.4 642.9,125.8 636.6,123.8 635.6,117.5 638.7,115.4"/>
</g>
<g fill="#e1e1e1">
<polygon points="392,110.3 419.7,105.5 423.4,113.3 418.2,114.8 415.6,113.3 393.5,114.2"/>
<polygon points="421.2,136.9 427.2,134.7 429.4,137.7 438.4,136.9 439.1,139.2 404.7,151.2 404,148.9 422.7,142.2"/>
<polygon points="414.4,158.6 430.1,151.9 431.6,154.9 427.9,157.1 430.1,163.9 417.4,168.4"/>
<polygon points="418.2,169.1 429.4,164.6 430.9,170.6 424.9,172.1 420.4,169.9"/>
<polygon points="413.7,172.1 417.4,171.4 417.4,176.6 414.1,177.1"/>
<polygon points="436.6,160.6 439.6,160.6 439.6,163.6 436.6,163.6"/>
<polygon points="414.4,195.3 421.2,193.1 421.9,196.1 415.9,198.3"/>
<polygon points="467.6,117.5 477.3,116.7 479.6,126.5 474.3,128 472.8,130.2 469.8,129.5"/>
<polygon points="484.8,117.5 505,113.7 505.7,121.2 501.3,119.7 488.5,123.8"/>
<polygon points="467.6,142.9 483.3,139.2 480.3,133.2 481.8,128 486.3,125.7 488.5,124.2 495.3,157.1 472.8,163.1"/>
<polygon points="698.6,112.5 705.9,103.4 728.8,103.4 705,121.6 703.2,116.1"/>
<polygon points="690.4,128.9 703.2,122.5 705,125.2 693.2,132.5"/>
<polygon points="707.8,134.4 738.8,111.6 741.5,117 711.4,138"/>
<polygon points="778.9,190.9 799.9,175.4 804.5,181.8 784.4,197.3"/>
<polygon points="756.1,207.3 777.1,192.8 781.7,200 761.6,214.6"/>
<polygon points="776.2,218.3 803.6,191.8 807.2,197.3 783.5,223.6 773.5,223.6"/>
<polygon points="811.8,203.7 818.2,197.3 820.9,200 814.5,206.4"/>
<polygon points="814.5,223.6 825.4,209.2 831.7,211 831.7,223.6"/>
<polygon points="663.1,210.1 680.4,200 687.7,212.8 675.8,223.6 667.6,223.6"/>
<polygon points="639.4,211.9 644.8,212.8 650.3,216.5 652.1,223.6 639.4,223.6"/>
<polygon points="327.7,290.2 340.5,287.9 342.3,292.1 356,290.2 356.9,294.8 348.7,296.6 350.5,302.1 359.7,301.2 364.2,308.5 335,313.4"/>
<polygon points="321.3,327.6 331.4,326.7 332.3,336.6 321.3,336.6"/>
<polygon points="384.3,324 391.6,323.1 389.8,329.5 385.2,331.3"/>
<polygon points="367.9,320.3 370.6,320 371.2,327.6 368.8,328"/>
<polygon points="427.2,264.7 436.3,265.6 441.8,274.7 445.4,293.9 453.6,292.1 455.4,300.3 433.6,303.9 433.2,313 428.1,313 423.5,303 428.1,293 431.7,290.2 429.9,278.4 425.3,275.6"/>
<polygon points="443.6,251.9 453.6,249.2 461.7,256.5 461.7,262.9 453.6,265.6 448.2,256.5"/>
<polygon points="417.1,254.7 429.9,251.9 430.8,254.7 418,257.4"/>
<polygon points="486.3,224.6 490.8,223.6 494.5,235.5 489.9,236.8"/>
<polygon points="510.9,275.6 522.8,273.8 528.2,299.4 529.2,301.2 490.8,306.1 490.5,302.1 510,298.5"/>
<polygon points="500,261.1 510,258.7 510.9,261.6 500.9,263.8"/>
<polygon points="454.4,281.7 465.3,279.3 466.2,290.2 454.4,292.4"/>
<polygon points="643.9,231.9 649.4,230 671.3,263.8 677.7,260.5 692.6,278 670.4,293"/>
<polygon points="639.4,262 643,262 646.6,274.7 662.2,313 659.4,315.8 655.8,313 644.8,314.9 639.4,314.9"/>
<polygon points="684.1,309.4 698.6,303.6 708.7,325.8 693.2,332.2"/>
<polygon points="715.1,284.8 750.6,258.3 754.3,262.9 717.8,290.2"/>
<polygon points="661.2,230 667.6,227.7 671.3,235.5 710.5,220 713.2,220.9 668.5,241"/>
<polygon points="678.6,224.6 685.9,222.2 687.7,227.3 680.4,230"/>
<polygon points="669.5,216.4 676.8,216.4 673.1,222.7"/>
<polygon points="767.1,224.6 774.4,219.1 778.9,219.1 770.7,227.3"/>
<polygon points="777.1,235.5 789,225.5 792.6,230 782.6,239.2"/>
<polygon points="796.3,243.7 803.6,238.2 806.3,241 798.1,247.4"/>
<polygon points="799,258.3 814.5,244.6 817.2,247.4 801.7,261.1"/>
<polygon points="813.6,261.1 831.7,243.7 831.7,249.2 815.4,263.8"/>
<polygon points="816.3,216.4 831.7,216.4 831.7,229.1 820,232.8 818.2,227.3"/>
<polygon points="757.9,324.9 772.5,317.6 774.7,322.2 760.7,329.5"/>
<polygon points="839,300.6 842.7,296.9 845.4,299.7 841.8,303.3"/>
<polygon points="921.6,296 931.6,298.8 925.2,311.6 917,307.9"/>
<polygon points="900.5,307.9 903.2,305.2 908.7,308.8 906.9,312.5"/>
<polygon points="875.7,329 883,321.7 885.8,323.5 878.4,331.2"/>
<polygon points="889.4,335.4 893.1,330.9 897.3,334.5 893.1,339.1"/>
<polygon points="917.9,324.4 938.1,333.6 932.6,342.8 923.4,332.7"/>
<polygon points="985.8,395.1 994,387.7 999.5,393.2 992.2,399.8"/>
<polygon points="285.8,349.4 292.2,347.6 295.8,360.4 294,365.8 284.9,367.7"/>
<polygon points="291.2,339.4 300.4,337.6 308.6,363.1 306.8,364 300.4,343.9 294.9,346.7 292.2,345.8"/>
<polygon points="322.3,329.4 332.3,329.4 336.9,354.9 327.7,359.5"/>
<polygon points="366,333.9 370.6,333 372.4,352.2 368.8,353.1"/>
<polygon points="387,338.5 392.5,336.6 394.3,345.8"/>
<polygon points="445.4,356.7 461.7,354 461.7,372.2 450,374.1"/>
<polygon points="438.1,360.4 440.9,359.5 445.4,383.2 442.7,384.1"/>
<polygon points="428.1,361.3 432.6,359.5 434.5,370.4 429.9,372.2"/>
<polygon points="439,345.8 450,343.9 450.5,346.1 439.9,348.5"/>
<polygon points="289.4,416 296.7,413.3 298.5,406.9 301.3,407.8 303.1,426 293.1,428.8"/>
<polygon points="312.2,407.8 322.3,407.8 320.8,421.5 311.7,421.5"/>
<polygon points="314.1,433.3 324.1,433 320.4,449.6 314.6,449.6"/>
<polygon points="291.2,440.6 304,437.9 304.9,449.6 292.2,449.6"/>
<polygon points="269.4,431.5 280.3,427.9 289.4,449.6 269.4,449.6"/>
<polygon points="275.7,399.6 282.1,397.8 283,400.9 276.6,402.7"/>
<polygon points="643.9,297.8 658,297.8 663.4,314.1 659.1,316.3 654.7,311.9 645,315.2"/>
<polygon points="684,309.8 699.2,303.3 709,325 693.8,331.5"/>
<polygon points="757.8,325 773,317.4 775.1,321.7 761,329.9"/>
<polygon points="276.6,498.9 283.9,495.6 287.2,500.7 281.2,514.4"/>
<polygon points="316.8,518.1 322.6,519.9 315.9,536.3 309.1,535"/>
<polygon points="435.9,462.8 461.7,464.2 461.7,516.2 439.9,516.2 438.7,509.9 435,508.9 441.8,474.3 435.4,473.4"/>
<polygon points="429.9,528.1 435.4,527.2 436.3,535.4 461.7,537.2 461.7,547.3 439.9,546.3 429.9,545.4"/>
<polygon points="472.6,458.8 479,458.8 478.1,469.7 472.2,469.7"/>
<polygon points="471.7,479.8 490.8,482.5 490.5,487.1 479.9,487.1 479.5,491.6 495.4,493.8 495.4,495.6 485.4,495.3 485,500.7 470.8,499.8"/>
<polygon points="505.1,482.5 511.8,503.5 505.1,502.9"/>
<polygon points="492.7,508.9 495.4,508 494.5,528.1 490.8,529 489.9,519"/>
<polygon points="454.4,538.1 465.3,539 474.4,541.8 481.7,546.3 480.8,550 475.3,548.2 468.9,544.5 454.4,547.3"/>
<polygon points="488.1,546.3 493.6,542.7 494.5,548.2 488.1,550"/>
<polygon points="533.7,442.4 540.1,442.4 541.9,456.9 547.4,458.8 545.6,460.6 539.2,458.8"/>
<polygon points="525.5,460.6 530.1,460.6 530.1,464.2 525.9,463.9"/>
<polygon points="541,489.8 549.2,488.9 548.9,496.2 541.9,497.1"/>
<polygon points="531.9,483.4 534.6,483.4 536.1,488.9 533.2,489.4"/>
<polygon points="542.3,532.7 548.3,532.7 549.2,554.6 541,554.6"/>
<polygon points="382.5,593.9 406.2,593.9 404.4,624.9 382.5,624.9"/>
<polygon points="431.7,597.5 461.7,597.5 461.7,603 433.6,604.8"/>
<polygon points="269.4,584.7 280.3,586.6 285.8,593.9 280.3,610.3 269.4,610.3"/>
<polygon points="454.4,593.9 472.6,594.8 471.7,600.2 454.4,600.2"/>
<polygon points="470.8,614.8 496.3,614.3 496.7,624.9 470.4,624.9"/>
<polygon points="741.5,588.4 757.9,575.6 770.7,575.6 778,582 787.1,579.3 789,575.6 799,575.6 798.1,580.2 789,588.4 783.5,584.7 776.2,591.1 768.9,584.7 761.6,581.1 745.2,592.9"/>
<polygon points="747,599.3 757.9,593.9 768.9,612.1 763.4,615.8 757,603 753.4,605.7 750.6,604.8"/>
<polygon points="934.4,581.4 943.6,575.9 947.2,579.5 949.1,590.5 939.9,594.2"/>
<polygon points="954.6,574.9 963.7,574.9 972.9,594.2 980.2,603.4 974.7,602.5 967.4,597.9 961.9,588.7"/>
<polygon points="980.2,546.5 989.4,548.3 993.1,544.7 998.6,550.2 980.2,566.7"/>
<polygon points="992.2,572.2 1004.1,563 1017.7,575.9 1017.7,594.2 1009.6,592.4 1000.4,581.4 996.8,577.7"/>
<polygon points="978.4,583.2 983.9,579.5 986.7,582.3 980.2,586.9"/>
<polygon points="961.9,616.2 969.2,612.5 971.1,616.2 964.7,619.9"/>
<polygon points="981.8,390.6 992.4,383.5 997.7,388.8 983.6,404.8"/>
<polygon points="983.6,415.4 1008.3,395.9 1011.2,399.5 987.1,420.7"/>
<polygon points="992.4,436.6 1003,429.6 1004.8,433.1 994.9,440.2"/>
<polygon points="1006.6,422.5 1011.2,418.9 1012.6,424.2 1008.3,427.8"/>
<polygon points="372.8,193.4 399.3,186.5 407.5,229.2 382.2,235.4"/>
<polygon points="416.4,199.9 440.9,195.8 446.2,221.1 421.7,226"/>
<polygon points="636.6,102.8 657.6,102.8 668.1,129 655.5,135.3 659.7,154.1 648.2,158.3 644,157.3 639.8,145.7 645,138.4 642.9,125.8 636.6,123.8 635.6,117.5 638.7,115.4"/>
</g>
<g fill="#f2efe6" stroke="#c20c14" stroke-width="1.6" stroke-linejoin="round">
<polygon points="269.4,216.4 277.6,216.4 277.6,274.7 269.4,278.4"/>
<polygon points="705,289.3 711.4,284.8 716,290.2 717.8,300.3 732.4,336.6 734.2,351.4 729.7,351.4 726.9,336.6 713.2,300.3 708.7,300.3"/>
<polygon points="713.3,297.8 719.8,297.8 728.5,321.7 733.9,348.8 729.6,348.8 724.1,323.9"/>
<polygon points="691.6,332.5 695.9,331.5 702.4,348.8 695.9,348.8"/>
<polygon points="903.2,574.9 914.2,574.9 936.2,625.4 924.3,625.4"/>
<polygon points="977.9,455 1016.1,490.1 1016.1,526.9 977.9,490.1"/>
</g>
<g fill="#f2efe6">
<polygon points="269.4,216.4 277.6,216.4 277.6,274.7 269.4,278.4"/>
<polygon points="705,289.3 711.4,284.8 716,290.2 717.8,300.3 732.4,336.6 734.2,351.4 729.7,351.4 726.9,336.6 713.2,300.3 708.7,300.3"/>
<polygon points="419.5,442.1 428.4,442.8 427.7,454.3 417.5,454.3"/>
<polygon points="713.3,297.8 719.8,297.8 728.5,321.7 733.9,348.8 729.6,348.8 724.1,323.9"/>
<polygon points="691.6,332.5 695.9,331.5 702.4,348.8 695.9,348.8"/>
<polygon points="855.5,574.9 880.3,574.9 877.5,579.5 881.2,596 884.9,616.2 881.2,625.4 872,625.4 871.1,610.7 864.7,603.4 851.8,600.6 839,607 831.7,625.4 824.3,625.4 824.3,596 835.3,596 846.3,585"/>
<polygon points="903.2,574.9 914.2,574.9 936.2,625.4 924.3,625.4"/>
<polygon points="977.9,455 1016.1,490.1 1016.1,526.9 977.9,490.1"/>
<polygon points="370,360 382.5,352.5 400.2,340.7 427.5,327.1 454,323.6 479.8,320.8 487,320 487,326.3 479.8,327.1 454,330.6 435.8,335.5 408.6,349.1 385.6,368 376,377"/>
</g>
<g fill="none" stroke="#c20c14" stroke-width="1.05">
<polyline points="404,151.9 444.4,136.9"/>
<polyline points="402.5,196.8 454.1,190.8"/>
<polyline points="430.9,163.9 437.6,163.1 438.4,167.6 451.9,166.1"/>
<polyline points="453.4,131 469.8,128"/>
<polyline points="484,116 487.8,117.5 505,113.7"/>
<polyline points="685,137.1 706.9,125.2"/>
<polyline points="730.6,214.6 778.9,180.9"/>
<polyline points="798.1,211.9 831.7,187.3"/>
<polyline points="752.5,223.8 794.4,192.8"/>
<polyline points="687.7,212.8 703.2,203.7"/>
<polyline points="300.4,243.7 327.7,243.7 327.7,225.5"/>
<polyline points="339.6,336.6 338.7,324 364.2,319.4 367.9,336.6"/>
<polyline points="421.7,259.2 417.1,293"/>
<polyline points="431.7,247.4 448.2,289.3"/>
<polyline points="438.1,262 461.7,257.4"/>
<polyline points="485.4,263.8 521.9,259.2"/>
<polyline points="486.3,270.2 522.8,266.5"/>
<polyline points="501.8,249.2 503.6,261.1"/>
<polyline points="454.4,271.5 476.2,266.5"/>
<polyline points="454.4,298.1 478.1,296.6"/>
<polyline points="666.7,241.9 694.1,278.4 705,289.3"/>
<polyline points="705,278.4 741.5,250.1"/>
<polyline points="717.8,296.6 734.2,293 739.7,303 772.5,282.9"/>
<polyline points="726,329.5 785.3,297.5"/>
<polyline points="763.4,311.2 781.7,300.3"/>
<polyline points="670.4,293 675.8,301.2 703.2,287.5"/>
<polyline points="662.2,305.8 673.1,299.4"/>
<polyline points="759.8,247.4 781.7,229.1"/>
<polyline points="778,265.6 807.2,240.1"/>
<polyline points="787.1,273.8 831.7,234.6"/>
<polyline points="796.3,282 831.7,252.8"/>
<polyline points="803.6,289.3 831.7,267.4"/>
<polyline points="814.5,300.3 831.7,287.5"/>
<polyline points="767.1,333.1 803.6,318.5"/>
<polyline points="872,314.3 916,325.4 938.1,305.2 939.9,294.2"/>
<polyline points="857.3,340 892.2,325.4 916,325.4"/>
<polyline points="883,308.8 914.2,318 919.7,307"/>
<polyline points="938.1,305.2 934.4,316.2 939.9,319.9 936.2,330.9 947.2,335.4 964.7,302.4"/>
<polyline points="956.4,321.7 969.2,324.4"/>
<polyline points="873.9,347.4 908.7,329"/>
<polyline points="337.8,329.4 343.2,370.4"/>
<polyline points="360.6,335.7 366,364.9"/>
<polyline points="302.2,337.6 315.9,375"/>
<polyline points="366,356.7 395.2,338.5"/>
<polyline points="407.1,349.4 408.9,393.2"/>
<polyline points="417.1,346.7 421.7,395.9"/>
<polyline points="429.9,343.9 435.4,397.8"/>
<polyline points="438.1,347.6 446.3,399.6"/>
<polyline points="389.8,365.8 399.8,368.6 397.1,389.6"/>
<polyline points="399.8,375.9 408,376.8"/>
<polyline points="302.2,391 305.8,431.5 327.7,432.4"/>
<polyline points="329.6,387.4 331.4,407.8 327.7,422.4 325.9,449.6"/>
<polyline points="342.3,388.6 337.8,407.8 331.4,407.8"/>
<polyline points="374.3,398.7 373.3,407.8 381.6,408.7"/>
<polyline points="364.2,410.5 380.6,415.1 377.9,424.2 351.5,416"/>
<polyline points="343.2,432.4 372.4,442.5"/>
<polyline points="422.6,420.6 418,449.6"/>
<polyline points="433.6,422.4 429,449.6"/>
<polyline points="465.3,329.4 468.9,372.2"/>
<polyline points="454.4,343 480.8,341.2"/>
<polyline points="467.1,353.1 481.7,352.2"/>
<polyline points="526.4,425.1 528.2,449.6"/>
<polyline points="648.2,346.6 693.8,330.4 728.5,336.9"/>
<polyline points="663.4,314.1 673.2,341.2"/>
<polyline points="732.8,330.4 800.1,315.2"/>
<polyline points="769.7,332.5 773,346.6"/>
<polyline points="789.2,336.9 793.6,343.4"/>
<polyline points="349.6,442.4 347.8,457.9"/>
<polyline points="368.8,471.5 384.3,478.8"/>
<polyline points="358.8,496.2 373.3,502.6"/>
<polyline points="348.7,519 362.4,524.5"/>
<polyline points="341.4,537.2 357.8,540.9 358.8,562.6"/>
<polyline points="380.6,547.3 381.6,562.6"/>
<polyline points="424.4,471.5 441.8,474.3"/>
<polyline points="420.8,492.5 437.2,495.3"/>
<polyline points="415.3,535.4 428.1,538.1"/>
<polyline points="438.1,517.2 461.7,518.1"/>
<polyline points="438.1,517.2 436.3,535.4"/>
<polyline points="463.5,442.4 458,500.7"/>
<polyline points="479.9,465.2 502.7,464.2"/>
<polyline points="478.1,473.4 503.6,475.2"/>
<polyline points="454.4,500.4 496.3,504 512.7,504.4"/>
<polyline points="496.3,504 493.6,540.9 510,542.7"/>
<polyline points="454.4,519 464.4,519 465.3,537.2"/>
<polyline points="482.6,540.9 483.5,562.6"/>
<polyline points="470.8,478.8 468.9,500.7"/>
<polyline points="510.9,456.9 528.2,458.8 557.4,457.9"/>
<polyline points="522.8,487.1 560.2,490.7"/>
<polyline points="541.9,497.1 542.8,509.9"/>
<polyline points="366,568.3 367,624.9"/>
<polyline points="333.2,608.5 382.5,610.3"/>
<polyline points="406.2,593.9 461.7,592"/>
<polyline points="479.9,579.3 476.2,593.9 509.1,599.3"/>
<polyline points="476.2,593.9 465.3,624.9"/>
<polyline points="527,624.9 529.2,612.1 533.7,611.2 534.6,606.6 543.8,607.5 542.8,616.7 560.2,620.3"/>
<polyline points="732.4,600.2 759.8,584.7 779.8,603 759.8,615.8"/>
<polyline points="855.5,574.9 846.3,585 835.3,596 824.3,596"/>
<polyline points="880.3,574.9 877.5,579.5 881.2,596 884.9,616.2 881.2,625.4"/>
<polyline points="831.7,625.4 839,607 851.8,600.6 864.7,603.4 871.1,610.7 872,625.4"/>
<polyline points="881.2,596 905,585"/>
<polyline points="884.9,616.2 916,603.4"/>
<polyline points="930.7,608.9 967.4,603.4"/>
<polyline points="939.9,618 945.4,616.2 974.7,599.7"/>
<polyline points="980,429.6 1012.6,404.8"/>
<polyline points="980,461.4 1012.6,440.2"/>
<polyline points="980,514.5 997.7,532.2"/>
<polyline points="382.5,352.5 400.2,340.7 427.5,327.1 454,323.6 479.8,320.8"/>
<polyline points="479.8,327.1 454,330.6 435.8,335.5 408.6,349.1 389.8,365.8"/>
<polyline points="622,114.9 636.6,112.2"/>
<polyline points="630.4,166.7 648.2,158.3"/>
</g>
<g fill="none" stroke="#5fb455" stroke-width="1.7">
<polyline points="562.9,103.4 579.3,223.6"/>
<polyline points="579.3,216.4 595.7,336.6"/>
<polyline points="269.4,398.7 302.2,390.5 329.6,387.2 353.3,389.9 382.5,399.6 397.1,416 461.7,424.8"/>
<polyline points="594.8,329.4 604,387.7 607.2,417.8 608.5,449.6"/>
<polyline points="454.4,422.8 478.1,427 503.6,423.3 540.1,424.2 571.1,420.6 607.2,417.8"/>
<polyline points="607.6,442.4 610.3,562.6"/>
<polyline points="610.3,526.4 610.9,624.9"/>
</g>
<g fill="none" stroke="#14281a" stroke-width="0.95" stroke-dasharray="5 1.5 1.5 1.5">
<polyline points="562.9,103.4 579.3,223.6"/>
<polyline points="579.3,216.4 595.7,336.6"/>
<polyline points="269.4,398.7 302.2,390.5 329.6,387.2 353.3,389.9 382.5,399.6 397.1,416 461.7,424.8"/>
<polyline points="594.8,329.4 604,387.7 607.2,417.8 608.5,449.6"/>
<polyline points="454.4,422.8 478.1,427 503.6,423.3 540.1,424.2 571.1,420.6 607.2,417.8"/>
<polyline points="607.6,442.4 610.3,562.6"/>
<polyline points="610.3,526.4 610.9,624.9"/>
</g>
</svg>
</div>
<svg style="left:273px;top:107px" width="741" height="514" viewBox="273 107 741 514"><rect x="500.5" y="156.5" width="21" height="15.5" fill="#000"/><path d="M511 158.1L518.02 161.74L503.98 161.74Z" fill="#e6e6e6"/><rect x="505.475" y="162.52" width="1.69" height="5.98" fill="#e6e6e6"/><rect x="508.595" y="162.52" width="1.69" height="5.98" fill="#e6e6e6"/><rect x="511.715" y="162.52" width="1.69" height="5.98" fill="#e6e6e6"/><rect x="514.835" y="162.52" width="1.69" height="5.98" fill="#e6e6e6"/><rect x="504.24" y="168.76" width="13.52" height="1.82" fill="#e6e6e6"/><rect x="611.8" y="145.3" width="18.6" height="18.8" fill="#000"/><path d="M614.9 151.8V159.6M614.9 157.4H629.1M629.1 154.6V159.6" fill="none" stroke="#fff" stroke-width="1.5"/><rect x="616" y="154.4" width="2.2" height="2" fill="#fff"/><rect x="618.8" y="155" width="9.6" height="1.5" fill="#fff"/><rect x="451" y="219.5" width="16.5" height="15" fill="#fff" stroke="#e8c8c8" stroke-width="0.8"/><path d="M459.2 221.5V232.5M453.7 227H464.7" stroke="#e00010" stroke-width="3.2"/><path d="M557 124.5L568.3 135.8L557 147.1L545.7 135.8Z" fill="#700000"/><path d="M557 129.7L563.048 132.836L550.952 132.836Z" fill="#fff"/><rect x="552.24" y="133.508" width="1.456" height="5.152" fill="#fff"/><rect x="554.928" y="133.508" width="1.456" height="5.152" fill="#fff"/><rect x="557.616" y="133.508" width="1.456" height="5.152" fill="#fff"/><rect x="560.304" y="133.508" width="1.456" height="5.152" fill="#fff"/><rect x="551.176" y="138.884" width="11.648" height="1.568" fill="#fff"/><path d="M690.4 170.5L701.7 181.8L690.4 193.1L679.1 181.8Z" fill="#700000"/><path d="M690.4 175.7L696.448 178.836L684.352 178.836Z" fill="#fff"/><rect x="685.64" y="179.508" width="1.456" height="5.152" fill="#fff"/><rect x="688.328" y="179.508" width="1.456" height="5.152" fill="#fff"/><rect x="691.016" y="179.508" width="1.456" height="5.152" fill="#fff"/><rect x="693.704" y="179.508" width="1.456" height="5.152" fill="#fff"/><rect x="684.576" y="184.884" width="11.648" height="1.568" fill="#fff"/><path d="M761 254L772 265L761 276L750 265Z" fill="#700000"/><path d="M759.6 271V259.2L765.2 261.6L760.8 264.2" fill="#fff" stroke="#fff" stroke-width="1.4" stroke-linejoin="round"/><path d="M521.3 373.3L532.6 384.6L521.3 395.9L510 384.6Z" fill="#700000"/><path d="M521.3 378.5L527.348 381.636L515.252 381.636Z" fill="#fff"/><rect x="516.54" y="382.308" width="1.456" height="5.152" fill="#fff"/><rect x="519.228" y="382.308" width="1.456" height="5.152" fill="#fff"/><rect x="521.916" y="382.308" width="1.456" height="5.152" fill="#fff"/><rect x="524.604" y="382.308" width="1.456" height="5.152" fill="#fff"/><rect x="515.476" y="387.684" width="11.648" height="1.568" fill="#fff"/><path d="M1005 571.9L1016.3 583.2L1005 594.5L993.7 583.2Z" fill="#700000"/><path d="M1005 577.1L1011.05 580.236L998.952 580.236Z" fill="#fff"/><rect x="1000.24" y="580.908" width="1.456" height="5.152" fill="#fff"/><rect x="1002.93" y="580.908" width="1.456" height="5.152" fill="#fff"/><rect x="1005.62" y="580.908" width="1.456" height="5.152" fill="#fff"/><rect x="1008.3" y="580.908" width="1.456" height="5.152" fill="#fff"/><rect x="999.176" y="586.284" width="11.648" height="1.568" fill="#fff"/><path d="M975 478L983 486L975 494L967 486Z" fill="#700000"/><path d="M1001 88.5L1013 100.5L1001 112.5L989 100.5Z" fill="#700000"/><circle cx="713.6" cy="165" r="8.2" fill="#f2ef1e" stroke="#d8d400" stroke-width="0.6"/><text x="713.6" y="169.7" font-family="Liberation Sans, sans-serif" font-size="13" text-anchor="middle" fill="#3a8a1e">H</text><circle cx="543.4" cy="347.6" r="8.2" fill="#b9dcf0" stroke="#8ab4e0" stroke-width="0.8"/><circle cx="543.4" cy="351.4" r="8.2" fill="#f2ef1e" stroke="#d8d400" stroke-width="0.6"/><text x="543.4" y="356.1" font-family="Liberation Sans, sans-serif" font-size="13" text-anchor="middle" fill="#3a8a1e">T</text><circle cx="529.7" cy="412.4" r="8.3" fill="#f2ef1e" stroke="#d8d400" stroke-width="0.6"/><text x="529.7" y="417.1" font-family="Liberation Sans, sans-serif" font-size="13" text-anchor="middle" fill="#3a8a1e">H</text><circle cx="337.8" cy="563.8" r="8.2" fill="#f2ef1e" stroke="#d8d400" stroke-width="0.6"/><text x="337.8" y="568.5" font-family="Liberation Sans, sans-serif" font-size="13" text-anchor="middle" fill="#3a8a1e">H</text><circle cx="300.65" cy="576.7" r="16.1" fill="none" stroke="#fff" stroke-width="1.2"/><path fill-rule="evenodd" d="M285 576.7A15.65 15.65 0 1 0 316.3 576.7A15.65 15.65 0 1 0 285 576.7ZM300.65 561.9L307.9 589.1L300.65 588L292.9 589.1Z" fill="#000"/></svg>
<span class="t halo" style="left:326.8px;top:565.5px;font-size:9px;transform:scaleX(0.9932);color:#111;font-weight:bold;">© SynerGIS Informationssysteme GmbH</span>
<span class="t halo" style="left:326.8px;top:576.5px;font-size:9px;transform:scaleX(0.9904);color:#111;font-weight:bold;">Sample Project © Stadt Graz</span>
<span class="t halo" style="left:326.8px;top:586.5px;font-size:9px;transform:scaleX(0.9861);color:#111;font-weight:bold;">Editieren © SynerGIS</span>
<svg style="left:815px;top:578px" width="160" height="20" viewBox="815 578 160 20"><rect x="823.5" y="589.5" width="110.5" height="4" fill="#fff" stroke="#000" stroke-width="1"/><rect x="851" y="589.5" width="28" height="4" fill="#000"/><rect x="906" y="589.5" width="28" height="4" fill="#000"/></svg>
<span class="t halo" style="left:821.2px;top:580.5px;font-size:9px;transform:scaleX(0.9191);color:#111;font-weight:bold;">0</span>
<span class="t halo" style="left:926.2px;top:580.5px;font-size:9px;transform:scaleX(0.9393);color:#111;font-weight:bold;">100 Meter</span>
<div style="left:308px;top:112px;width:40px;height:30px;background:rgba(255,255,255,0.93);"></div><div style="left:348px;top:112px;width:67px;height:30px;background:rgba(255,255,255,0.58);"></div><div style="left:308px;top:112px;width:107px;height:30px;border:1px solid rgba(200,200,200,0.85);box-sizing:border-box;"></div>
<span class="t " style="left:313.5px;top:120px;font-size:12px;transform:scaleX(0.9424);color:#444;">Ich will ...</span>
<div class="box" style="left:364px;top:117px;width:36px;height:19px;border-color:#b5b5b5;"></div>
<div style="left:277px;top:147px;width:25px;height:191px;background:#fff;border:1px solid #e0e0e0;box-sizing:border-box;"></div>
<div style="left:279px;top:312px;width:22px;height:1px;background:#d0d0d0;"></div>
<svg style="left:278px;top:147px" width="24" height="191" viewBox="278 147 24 191">
<g fill="none" stroke="#3f7ec6" stroke-width="1.2"><circle cx="289.3" cy="160.3" r="7"/><ellipse cx="289.3" cy="160.3" rx="3.2" ry="7"/><path d="M282.3 160.3H296.3M289.3 153.3V167.3M283.4 156.6H295.2M283.4 164H295.2"/></g>
<g fill="none" stroke="#8a8a8a"><circle cx="290.5" cy="180.5" r="5.4" stroke-width="1.2"/><path d="M286.6 184.6L282.6 188.6" stroke-width="2.2"/></g>
<path d="M288 180.5H293M290.5 178V183" stroke="#3f7ec6" stroke-width="1.4"/>
<g fill="none" stroke="#8a8a8a"><circle cx="290.5" cy="202.3" r="5.4" stroke-width="1.2"/><path d="M286.6 206.4L282.6 210.4" stroke-width="2.2"/></g>
<path d="M288 202.3H293" stroke="#3f7ec6" stroke-width="1.4"/>
<g fill="none" stroke="#8a8a8a"><circle cx="290.5" cy="224.2" r="5.4" stroke-width="1.2"/><path d="M286.6 228.3L282.6 232.3" stroke-width="2.2"/></g>
<path d="M288.8 224.2L292 221.8V226.6Z" fill="#3f7ec6"/>
<g fill="none" stroke="#8a8a8a"><circle cx="290.5" cy="245.8" r="5.4" stroke-width="1.2"/><path d="M286.6 249.9L282.6 253.9" stroke-width="2.2"/></g>
<path d="M292.4 245.8L289.2 243.4V248.2Z" fill="#3f7ec6"/>
<circle cx="289.3" cy="272" r="5.8" fill="none" stroke="#3f7ec6" stroke-width="1.2"/><circle cx="289.3" cy="272" r="2.9" fill="#3f7ec6"/><rect x="296" y="267" width="1" height="9" fill="#8a8a8a"/>
<rect x="285" y="292" width="8.6" height="8.6" fill="#c8c8c8"/>
<g stroke="#3f7ec6" stroke-width="1.3" fill="none"><path d="M283 289.8L288 294.8M295.6 289.8L290.6 294.8M283 302.6L288 297.6M295.6 302.6L290.6 297.6"/><path d="M283 293.2V289.8H286.4M292.2 289.8H295.6V293.2M283 299.2V302.6H286.4M292.2 302.6H295.6V299.2"/></g>
<path d="M284 328.2L289.3 323L294.6 328.2" fill="none" stroke="#6e6e6e" stroke-width="2.4"/>
<rect x="297" y="322" width="1" height="7" fill="#7ea6e0"/>
</svg>
<div style="left:828px;top:112px;width:181px;height:181px;background:#fff;border:1px solid #d0d0d0;box-sizing:border-box;"></div>
<svg class="ovsvg" style="left:833px;top:117px" width="171" height="171" viewBox="833 117 171 171">
<rect x="833" y="117" width="171" height="171" fill="#ebe8df"/>
<g fill="#dadada" stroke="#505050" stroke-width="0.7" stroke-linejoin="miter">
<polygon points="949.3,248.4 949.1,247.6 948.0,247.6 939.4,250.4 939.3,256.6 946.3,255.1"/>
<polygon points="974.0,307.9 982.0,293.2 976.8,287.2 973.6,302.3"/>
<polygon points="962.5,282.2 970.8,286.5 968.5,291.1 960.8,288.7 962.3,282.5"/>
<polygon points="1003.9,229.4 1004.6,236.7 1011.0,234.9 1011.6,232.2 1006.5,228.4"/>
<polygon points="992.3,119.0 996.9,117.4 1003.9,122.2 1004.2,125.3 998.9,126.8 992.8,120.4"/>
<polygon points="908.6,154.3 910.5,155.4 916.5,154.3 918.3,150.3 910.5,145.4 906.6,149.9 906.6,150.5"/>
<polygon points="926.1,222.2 929.8,221.1 932.1,217.4 931.5,214.0 928.7,211.5 923.1,214.7"/>
<polygon points="867.9,292.1 872.3,278.3 880.0,279.8 880.4,280.1 879.0,290.0 868.3,292.5"/>
<polygon points="973.7,141.4 976.4,141.0 979.5,138.2 973.2,128.4 968.0,131.2 971.7,141.1"/>
<polygon points="973.9,127.9 976.0,121.8 981.6,123.1 983.8,134.5 981.0,137.2 980.2,137.5"/>
<polygon points="946.6,123.5 946.8,130.3 938.6,136.1 936.7,135.5 940.3,124.5"/>
<polygon points="854.6,145.3 858.4,152.4 867.4,150.4 865.0,139.2 862.8,136.9"/>
<polygon points="934.2,240.6 933.0,242.8 925.5,247.1 921.7,243.2 921.3,242.2 925.5,232.8 930.7,234.4"/>
<polygon points="866.1,292.5 853.7,297.6 855.3,289.7 860.4,287.9"/>
<polygon points="959.3,292.2 962.7,300.2 952.0,299.6 953.1,296.8"/>
<polygon points="1003.0,161.5 998.6,165.6 990.3,156.4 990.3,156.2 990.9,155.7 998.9,156.1"/>
<polygon points="896.6,138.4 895.0,140.9 894.5,141.2 887.2,138.0 885.5,132.7 893.1,130.4"/>
<polygon points="853.9,118.7 854.2,116.9 849.6,109.3 844.0,108.7 840.0,114.8 847.5,123.0 851.5,122.6"/>
<polygon points="879.7,230.3 885.2,224.0 882.4,216.4 877.4,216.8 872.5,220.4 875.7,229.7"/>
<polygon points="887.9,158.6 885.4,158.1 879.4,162.5 883.1,168.2 891.9,167.1"/>
<polygon points="988.4,194.8 987.2,193.1 977.7,198.1 977.5,201.3 978.0,202.3 984.5,203.1 988.3,199.9"/>
<polygon points="885.7,198.4 885.6,193.0 884.9,191.9 878.1,197.2 878.6,202.6 881.7,203.8"/>
<polygon points="953.4,117.0 960.5,107.4 964.3,114.8 957.1,118.9"/>
<polygon points="973.3,273.7 972.5,276.4 964.1,277.6 962.7,272.6 970.7,268.9"/>
<polygon points="891.0,211.5 896.7,215.8 897.0,221.3 889.9,224.4 886.4,223.4 883.5,215.9 885.7,212.9"/>
<polygon points="855.5,262.7 849.8,251.5 857.0,247.4 861.7,248.9 862.7,258.8"/>
<polygon points="999.7,298.4 999.5,293.3 1001.4,288.0 1004.9,285.8 1010.3,291.9 1009.0,295.7 1000.3,299.6"/>
<polygon points="892.9,168.6 894.6,171.9 887.8,179.8 882.1,173.0 883.6,169.3 892.0,168.2"/>
<polygon points="931.7,260.7 925.5,251.2 920.5,258.0 922.0,264.1 924.4,264.1"/>
<polygon points="831.5,250.9 837.8,260.7 838.8,260.6 846.5,251.1 840.5,244.4 836.7,245.6"/>
<polygon points="979.3,281.6 978.0,282.0 973.9,276.8 974.8,274.1 982.7,270.1 983.8,273.8"/>
<polygon points="839.2,172.5 831.9,175.8 826.7,169.6 829.2,164.0 833.3,164.1 839.8,169.4"/>
<polygon points="943.7,290.6 941.3,293.2 937.3,290.1 938.3,282.0 943.3,285.9"/>
<polygon points="881.4,280.3 891.2,281.6 891.8,282.5 889.2,294.5 885.1,297.1 880.3,290.3"/>
<polygon points="921.7,162.6 921.5,163.2 925.2,169.9 931.2,167.6 931.8,164.7 926.6,160.3"/>
<polygon points="876.3,136.3 879.9,142.8 885.7,137.8 884.3,132.7 881.5,130.8 878.4,131.9"/>
<polygon points="834.5,127.0 828.2,129.0 827.8,129.5 829.2,135.8 832.3,136.4 839.7,132.9 840.2,129.8"/>
<polygon points="905.0,150.2 905.1,149.5 895.8,142.3 895.3,142.6 893.8,146.4 895.0,152.8 897.0,153.7"/>
<polygon points="933.1,261.5 936.3,260.9 943.9,268.0 934.1,276.3"/>
<polygon points="910.7,191.6 913.2,192.4 913.1,183.8 907.2,182.2 906.5,186.9"/>
<polygon points="829.3,279.7 826.5,279.2 820.8,285.9 831.6,292.7 833.2,292.8 837.3,285.9"/>
<polygon points="991.2,119.4 991.5,120.8 990.6,133.0 984.6,134.3 982.6,122.5 990.4,119.3 991.0,119.3"/>
<polygon points="973.3,308.0 973.2,309.1 964.1,300.1 960.3,292.0 960.5,289.9 960.6,289.8 968.6,292.5 972.5,302.4"/>
<polygon points="949.3,268.3 953.9,265.3 946.4,256.7 939.3,257.7 937.0,260.3 944.8,267.3"/>
<polygon points="843.5,193.2 841.6,184.4 834.5,184.1 832.6,191.9 841.9,194.1"/>
<polygon points="856.2,274.7 853.8,266.6 846.1,266.8 843.1,274.8 845.2,281.4 847.3,281.0"/>
<polygon points="877.5,196.3 874.2,195.0 873.6,189.7 880.7,187.2 883.5,187.7 884.4,191.2"/>
<polygon points="913.8,252.8 924.4,248.4 924.5,248.0 920.7,244.3 912.6,248.0 913.3,252.3"/>
<polygon points="917.1,155.5 911.0,156.7 911.5,166.5 920.0,162.6 920.2,162.0"/>
<polygon points="901.9,136.1 897.5,137.9 894.0,129.6 894.8,127.4 901.9,122.7 903.3,124.7"/>
<polygon points="1007.1,227.6 1012.3,231.4 1015.3,229.7 1014.5,224.8 1008.9,225.4"/>
<polygon points="911.8,167.5 920.3,163.7 924.2,170.6 923.6,172.7 918.1,175.9 911.5,170.4 910.7,168.6"/>
<polygon points="829.3,162.9 828.2,160.1 831.5,151.2 842.1,155.8 841.8,157.2 833.5,162.5"/>
<polygon points="899.6,261.1 894.9,266.7 888.3,265.5 886.3,258.3 898.1,255.0 898.8,256.3"/>
<polygon points="975.3,245.6 969.8,242.5 969.7,242.3 973.9,238.6 978.5,240.8"/>
<polygon points="955.4,264.6 956.5,263.1 957.4,254.1 950.2,248.7 947.3,256.2 954.5,264.7"/>
<polygon points="897.5,238.5 894.0,237.4 889.8,238.5 885.3,246.8 885.4,247.1 897.6,250.3 899.1,245.7"/>
<polygon points="877.3,202.9 871.0,205.2 869.4,204.8 870.1,199.0 873.5,196.3 876.7,197.6"/>
<polygon points="946.8,224.2 944.5,216.0 944.8,215.1 951.7,215.6 956.0,221.7 952.4,225.7 951.3,225.8"/>
<polygon points="872.0,233.1 867.3,232.7 863.9,236.0 867.8,244.6 870.2,244.5 871.1,243.6"/>
<polygon points="917.0,267.0 911.8,262.4 904.3,263.2 909.7,273.7 914.7,273.2"/>
<polygon points="893.5,236.1 889.1,237.1 882.2,233.7 880.6,231.1 886.0,224.9 889.5,225.9"/>
<polygon points="881.2,278.8 883.7,269.3 887.7,266.8 894.3,268.0 894.6,273.5 891.3,280.2 881.5,279.1"/>
<polygon points="987.0,241.6 994.6,236.9 999.3,240.4 998.9,241.5 991.6,246.3 988.2,244.4"/>
<polygon points="920.4,213.4 917.2,207.2 922.7,203.6 926.8,205.1 927.8,207.2 928.0,210.4 922.6,213.6"/>
<polygon points="1007.1,194.4 1003.2,199.9 1007.9,206.7 1008.6,206.0 1011.9,198.1 1010.3,195.3"/>
<polygon points="960.7,242.6 952.1,243.5 950.5,247.1 950.8,247.9 957.6,252.7 961.0,250.5"/>
<polygon points="970.7,141.3 964.6,143.0 958.0,136.9 957.9,135.3 966.5,131.2 967.1,131.3"/>
<polygon points="981.2,223.0 981.4,216.2 976.3,213.1 972.0,218.1 974.3,226.9"/>
<polygon points="948.7,192.0 947.4,183.7 950.7,182.2 955.7,184.6 953.4,189.9"/>
<polygon points="913.0,230.8 912.0,235.7 899.2,237.1 901.3,232.6 908.8,228.5"/>
<polygon points="856.3,235.9 862.8,236.3 867.0,245.0 862.0,247.6 857.4,245.9 855.2,236.9"/>
<polygon points="855.2,116.2 850.5,108.3 860.2,93.6 864.4,107.9"/>
<polygon points="907.5,181.2 913.4,182.4 917.0,179.8 917.5,176.9 910.8,171.3 906.6,180.1"/>
<polygon points="939.9,225.8 940.6,226.0 945.6,224.4 943.7,216.3 938.1,219.9"/>
<polygon points="867.2,291.8 866.8,291.7 861.4,286.7 860.8,276.9 869.0,276.2 871.5,278.2"/>
<polygon points="872.9,188.7 880.2,186.2 872.7,177.0 869.1,181.5 871.6,188.2"/>
<polygon points="836.0,270.6 835.5,264.9 837.9,262.3 838.9,262.2 845.0,266.1 842.1,274.2"/>
<polygon points="887.6,114.0 894.7,114.0 896.6,106.8 890.5,103.1 886.9,110.2"/>
<polygon points="935.4,112.7 949.4,117.2 946.4,122.4 940.3,122.9 934.9,117.3"/>
<polygon points="936.7,291.2 932.4,291.9 932.5,298.8 942.0,309.0 942.4,307.6 940.9,294.7"/>
<polygon points="987.2,191.6 990.0,183.0 980.0,179.1 976.4,182.4 975.3,185.8"/>
<polygon points="983.7,236.9 986.4,230.8 982.2,224.6 981.6,224.3 974.8,227.8 974.8,227.8"/>
<polygon points="937.7,218.6 943.2,215.4 943.5,214.5 941.7,210.2 932.9,213.6 933.6,217.2"/>
<polygon points="945.9,165.8 936.4,171.5 937.3,180.1 940.3,179.6 946.5,170.5"/>
<polygon points="846.0,211.2 841.9,220.3 836.5,221.9 832.8,216.8 837.6,211.0 845.8,210.8"/>
<polygon points="938.5,280.3 938.9,281.3 944.1,284.6 949.0,282.4 949.9,280.2 948.5,277.5"/>
<polygon points="897.8,193.8 898.3,190.2 896.5,185.7 887.8,183.6 884.9,187.4 885.9,190.9 886.7,191.9"/>
<polygon points="871.4,161.2 870.6,162.4 856.5,165.5 857.5,155.1 858.7,153.6 867.6,151.7 868.6,152.2"/>
<polygon points="1011.2,290.9 1023.1,287.1 1008.1,279.6 1005.8,285.1"/>
<polygon points="938.3,150.8 943.3,153.6 943.2,159.8 938.2,159.3 931.5,152.9"/>
<polygon points="899.8,161.4 894.3,168.0 895.9,171.4 896.5,171.6 908.1,168.1 901.8,161.6"/>
<polygon points="835.0,228.8 836.7,223.2 842.0,221.9 846.4,225.8 844.2,235.0 843.3,235.5"/>
<polygon points="908.1,155.7 910.2,157.0 910.6,166.5 909.8,167.7 908.9,167.5 902.9,161.1"/>
<polygon points="983.5,264.8 972.8,263.1 971.8,268.0 974.5,272.9 982.4,269.2"/>
<polygon points="973.9,143.0 972.3,155.2 973.8,155.7 982.5,154.3 976.7,142.4"/>
<polygon points="862.8,134.0 869.6,126.0 877.1,131.5 874.8,136.2 865.8,137.9 863.6,135.8"/>
<polygon points="940.8,203.6 945.1,194.1 933.2,191.1 933.6,194.8 939.6,202.9"/>
<polygon points="972.5,127.1 975.0,121.5 972.9,118.4 964.4,124.6 967.2,129.8 967.8,129.9"/>
<polygon points="973.1,157.1 975.1,167.2 972.4,167.3 967.3,161.4 967.0,159.5 969.9,156.9 971.7,156.6"/>
<polygon points="884.4,212.0 882.4,215.0 877.5,215.3 871.4,206.2 878.2,204.0 881.2,205.3"/>
<polygon points="973.3,227.2 973.4,227.2 971.0,218.6 963.6,216.8 960.7,221.3 968.9,228.2 972.1,228.0"/>
<polygon points="830.4,150.7 830.3,150.2 825.4,147.2 814.9,153.7 827.3,159.6"/>
<polygon points="913.8,286.6 907.3,282.9 906.4,292.0 906.7,292.1 914.0,288.0"/>
<polygon points="995.5,207.6 991.3,212.7 993.5,215.1 1004.0,214.1 1005.1,213.5 1006.6,211.6 1006.4,210.0"/>
<polygon points="906.3,222.1 899.1,221.7 898.4,221.3 898.2,215.9 906.1,211.1 909.3,217.4"/>
<polygon points="953.6,226.5 956.5,231.6 962.9,235.0 968.0,228.9 959.9,221.9 957.2,222.5"/>
<polygon points="895.3,172.8 888.5,180.3 888.1,182.5 896.8,184.6 900.2,179.4 895.8,173.0"/>
<polygon points="985.0,135.6 982.0,138.1 991.7,147.1 994.1,144.4 994.5,136.1 990.6,134.5"/>
<polygon points="880.1,278.6 882.4,269.0 877.3,265.0 871.4,266.2 870.0,275.0 872.5,276.9"/>
<polygon points="834.7,271.3 834.4,265.2 829.7,265.8 824.7,274.3 826.5,277.8 829.4,278.1"/>
<polygon points="961.0,188.1 961.0,193.2 954.6,190.1 956.8,185.0 957.7,184.8"/>
<polygon points="871.4,264.9 868.5,260.7 874.6,254.5 880.6,255.9 880.6,255.9 877.2,263.5"/>
<polygon points="1004.8,126.4 1008.2,130.8 1008.6,132.1 1005.6,135.9 997.8,134.7 999.6,128.1"/>
<polygon points="915.1,217.4 919.2,213.9 915.9,207.6 910.3,206.1 907.3,210.1 907.2,210.6 910.3,216.5"/>
<polygon points="859.1,219.1 856.7,221.9 847.6,224.8 842.9,220.9 847.2,211.3 858.1,215.2 859.2,218.8"/>
<polygon points="976.0,120.3 981.5,121.6 989.8,118.4 980.3,109.2 976.1,109.3 975.3,110.0 973.4,115.8 973.9,117.3"/>
<polygon points="870.1,265.8 867.2,261.5 863.1,260.1 856.1,263.9 855.0,266.1 857.5,274.1 860.5,275.5 868.8,274.8"/>
<polygon points="979.1,239.9 974.7,237.4 973.1,229.2 974.4,228.4 983.3,237.4 983.4,239.0"/>
<polygon points="949.2,291.1 951.6,296.7 950.7,299.5 943.0,307.6 942.1,294.4 944.6,291.8"/>
<polygon points="958.4,123.3 963.2,125.2 966.0,130.3 957.5,134.4 956.2,132.3"/>
<polygon points="839.6,173.7 845.6,179.7 841.4,183.1 834.6,182.9 832.8,180.6 832.4,176.9"/>
<polygon points="837.7,114.6 831.5,108.5 826.1,110.5 825.1,116.1 826.3,116.8 832.8,117.7"/>
<polygon points="932.4,260.0 926.3,250.7 925.9,248.8 925.9,248.3 933.6,243.9 937.9,250.6 938.0,256.8 935.8,259.4 932.6,260.1"/>
<polygon points="992.2,120.9 998.3,128.0 996.7,134.3 995.1,134.9 991.3,133.3"/>
<polygon points="1011.3,171.4 1009.9,180.1 998.2,177.3 998.4,175.2 1008.2,171.4"/>
<polygon points="829.9,250.0 823.3,242.2 825.8,234.5 835.7,244.7 830.5,250.0"/>
<polygon points="915.4,286.3 919.4,278.9 926.1,280.3 925.7,288.2 922.4,291.2 918.2,290.3 915.5,287.7"/>
<polygon points="926.1,223.6 929.8,222.7 934.0,227.8 930.7,232.9 925.7,231.4 922.6,227.9"/>
<polygon points="860.6,218.2 859.6,214.6 862.8,208.6 868.7,206.2 870.3,206.6 876.5,215.8 871.3,219.4"/>
<polygon points="863.7,258.7 862.9,248.8 867.7,246.2 870.1,246.0 873.7,253.5 867.7,260.1"/>
<polygon points="928.1,125.3 919.6,121.7 917.2,125.3 920.6,132.3 929.2,129.3"/>
<polygon points="871.9,176.3 871.9,176.3 868.2,180.3 861.7,181.9 858.2,172.7 870.2,173.2"/>
<polygon points="836.3,244.0 840.1,243.0 842.8,236.3 834.2,229.6 826.1,232.7 826.3,234.0"/>
<polygon points="989.7,194.8 997.2,194.8 999.3,198.8 994.0,202.6 989.8,199.7"/>
<polygon points="878.3,264.0 881.5,256.3 885.1,258.8 887.1,265.6 883.1,267.9"/>
<polygon points="1004.9,237.7 1011.1,236.0 1014.0,238.9 1009.8,243.5 1004.6,238.3"/>
<polygon points="857.3,130.7 852.6,123.6 855.2,119.7 869.0,122.3 868.9,125.3 861.9,133.3"/>
<polygon points="869.9,172.3 858.0,171.8 855.6,169.8 855.3,168.4 856.6,166.4 870.6,163.3"/>
<polygon points="989.2,200.8 985.5,204.2 987.6,211.7 990.5,212.0 994.2,207.0 993.4,203.9"/>
<polygon points="967.7,176.7 974.9,182.2 973.9,185.5 973.1,186.4 967.2,184.9 964.2,180.8"/>
<polygon points="839.1,113.8 842.8,108.0 837.5,96.3 832.5,107.8 838.5,113.9"/>
<polygon points="914.3,285.6 907.6,281.7 907.1,280.7 908.4,276.5 909.8,275.2 914.7,274.5 918.5,278.2"/>
<polygon points="933.4,190.2 932.3,188.5 934.6,183.6 937.3,181.5 940.3,181.1 946.1,183.7 947.7,192.3 947.6,192.5 945.4,193.1"/>
<polygon points="904.5,123.8 903.0,121.9 903.0,119.5 911.1,111.2 917.8,118.8 918.3,121.1 915.8,124.7 911.0,126.5"/>
<polygon points="848.6,138.1 842.9,135.3 841.3,132.8 841.8,129.8 847.3,124.6 851.4,124.0 856.1,131.3"/>
<polygon points="854.0,167.7 855.3,165.5 856.1,155.3 844.5,154.9 843.5,156.0 843.3,157.4 847.5,164.9"/>
<polygon points="868.7,198.9 868.3,204.8 862.5,207.3 859.0,199.9 864.5,194.3"/>
<polygon points="960.7,241.6 952.3,242.4 951.9,240.8 956.2,233.0 962.5,236.2 962.6,239.8"/>
<polygon points="914.4,288.7 907.0,292.8 910.8,300.2 917.1,291.3"/>
<polygon points="879.4,231.7 875.6,231.2 873.0,232.9 871.9,243.6 878.4,242.4 880.7,234.3"/>
<polygon points="855.4,118.8 855.8,116.9 865.1,108.9 869.8,111.9 871.8,117.1 869.2,121.4"/>
<polygon points="962.0,242.6 962.1,250.2 967.6,251.5 968.3,243.0 968.2,242.8 963.7,240.7"/>
<polygon points="853.4,146.1 857.3,152.8 856.1,154.3 844.6,153.9 845.0,148.5 850.2,144.6"/>
<polygon points="951.8,288.8 959.3,289.5 958.9,291.4 952.7,295.9 950.3,290.5"/>
<polygon points="830.0,251.6 824.6,255.0 826.1,261.8 829.7,264.2 834.3,263.9 837.0,261.2 830.6,251.6"/>
<polygon points="910.3,110.4 902.4,118.6 896.0,114.3 898.0,106.8 906.9,103.2 910.3,110.2"/>
<polygon points="1010.9,116.4 1000.9,112.1 1001.3,110.0 1009.8,108.5 1015.7,115.5"/>
<polygon points="886.3,114.5 883.6,118.3 873.2,116.8 871.3,111.6 878.4,106.2 885.4,110.6"/>
<polygon points="850.9,200.2 855.5,199.2 857.7,200.3 861.4,207.9 858.3,214.1 847.4,210.3 847.1,209.9 847.1,209.0"/>
<polygon points="891.9,210.5 897.6,214.7 905.7,210.2 905.8,209.8 896.0,203.9 894.5,204.8"/>
<polygon points="998.0,225.9 1003.2,228.1 1005.8,226.9 1007.5,224.6 1005.7,214.5 1004.6,215.3 997.9,225.7"/>
<polygon points="977.4,142.1 983.4,154.0 984.8,154.7 989.1,155.2 989.8,154.6 991.1,147.9 981.5,138.8 980.6,139.1"/>
<polygon points="840.7,168.7 846.5,165.5 842.4,157.8 834.1,163.3"/>
<polygon points="989.1,156.7 989.1,156.6 984.8,156.3 977.6,167.9 980.6,171.2 988.1,168.0"/>
<polygon points="893.9,126.2 884.9,119.0 884.9,119.0 887.7,115.2 894.9,115.4 901.4,119.4 901.4,121.7"/>
<polygon points="963.9,215.8 971.0,217.1 975.4,212.3 974.6,210.8 966.9,209.8 964.1,210.7"/>
<polygon points="997.5,227.0 994.6,231.0 995.5,235.8 1000.0,239.4 1003.2,237.6 1003.5,236.9 1002.8,229.6"/>
<polygon points="987.7,291.6 989.8,296.6 998.6,298.5 997.9,293.4 989.0,289.2"/>
<polygon points="939.7,139.1 938.8,149.6 943.8,152.6 944.5,151.5 943.9,142.3"/>
<polygon points="896.8,172.3 901.4,178.8 905.8,179.5 909.9,170.9 909.4,169.0 908.5,168.9"/>
<polygon points="958.8,122.2 963.8,123.8 972.4,117.8 971.9,116.2 965.0,115.7 957.6,119.6"/>
<polygon points="929.5,130.3 935.1,136.1 926.4,144.3 919.1,137.1 921.0,133.4"/>
<polygon points="996.2,260.9 997.0,262.2 1009.7,268.0 1012.5,265.5 1011.6,259.4 1000.2,257.4 997.1,259.2"/>
<polygon points="1000.3,198.1 1002.3,199.0 1006.1,193.7 1002.9,189.0 1001.6,188.5 998.5,194.2"/>
<polygon points="899.8,195.0 910.0,192.3 905.3,187.5 899.8,190.6 899.1,193.8"/>
<polygon points="973.1,302.1 969.7,291.6 971.9,287.3 976.1,286.0 976.3,287.0"/>
<polygon points="866.0,139.0 868.5,150.3 869.5,150.9 878.6,146.9 879.0,143.7 875.3,137.2"/>
<polygon points="936.3,180.2 933.7,182.4 925.1,173.2 925.7,171.1 931.9,168.8 935.0,171.7"/>
<polygon points="973.2,142.8 971.6,155.1 969.6,155.4 964.1,147.3 965.3,144.3 971.0,142.5"/>
<polygon points="893.8,153.4 892.6,146.8 882.5,149.2 885.8,156.6 888.4,157.2"/>
<polygon points="987.8,230.5 993.5,229.9 996.5,226.3 996.4,226.1 993.1,222.9 983.2,224.1"/>
<polygon points="995.8,136.2 995.2,144.5 1007.0,145.8 1005.1,137.0 997.5,135.7"/>
<polygon points="950.4,269.4 954.8,266.3 955.8,266.1 961.2,272.7 962.7,277.8 961.6,280.9 961.4,281.2 951.3,279.5 949.8,276.7"/>
<polygon points="919.0,226.9 921.7,227.1 925.0,222.6 922.2,215.1 920.0,214.9 916.2,218.4"/>
<polygon points="854.8,170.8 857.3,173.2 860.3,182.2 858.8,185.1 854.7,186.5 854.7,186.5 847.6,179.8"/>
<polygon points="881.2,174.0 873.4,176.5 873.4,176.6 881.0,185.6 883.8,186.5 886.7,182.6 886.9,180.5"/>
<polygon points="909.4,245.0 912.2,247.2 920.2,243.6 919.8,242.5 913.3,237.9"/>
<polygon points="982.5,291.9 986.4,290.7 987.7,288.4 987.5,285.5 979.8,283.1 978.4,283.4 977.3,285.5 977.6,286.5"/>
<polygon points="953.5,201.5 958.3,201.6 960.6,208.2 953.7,210.1 950.5,205.0"/>
<polygon points="965.8,161.7 961.0,169.1 955.6,162.7 962.6,159.3 965.6,159.8"/>
<polygon points="1004.1,161.0 1009.8,159.0 1007.2,149.1 1000.4,155.9 1004.0,161.0"/>
<polygon points="964.0,239.4 964.0,235.7 968.8,229.8 972.1,229.3 973.3,237.5 968.8,241.5"/>
<polygon points="999.6,154.8 990.9,154.8 992.7,148.0 995.2,145.5 1006.8,146.6 1007.2,147.0 1006.6,148.5"/>
<polygon points="952.8,214.9 954.1,211.4 961.0,209.3 962.8,211.0 962.4,216.0 959.8,220.3 957.0,221.0"/>
<polygon points="965.9,173.1 961.2,171.0 958.1,174.6 960.2,180.0 963.3,179.8 966.6,175.9"/>
<polygon points="878.5,161.7 884.6,157.0 881.3,149.4 879.2,148.0 869.9,151.9 872.6,160.9"/>
<polygon points="855.3,234.7 856.9,223.1 847.6,226.0 845.2,235.3 854.3,235.7"/>
<polygon points="980.1,282.2 988.1,284.5 991.5,280.9 991.7,278.8 984.8,274.2"/>
<polygon points="1008.0,145.6 1008.3,146.1 1010.9,146.0 1023.2,135.0 1009.5,133.0 1006.5,137.1"/>
<polygon points="854.0,144.6 862.1,136.4 861.3,134.5 856.7,132.1 849.6,138.8 850.6,143.3"/>
<polygon points="935.2,228.5 931.9,233.6 935.2,239.8 937.0,239.3 941.3,235.7 940.1,227.5 939.3,227.3"/>
<polygon points="831.4,193.1 833.1,202.4 832.4,203.7 825.0,205.2 823.0,203.6 828.9,193.6"/>
<polygon points="839.6,143.9 841.7,136.3 840.2,133.8 833.0,137.5 835.4,144.3"/>
<polygon points="971.5,262.8 969.7,260.6 957.7,263.9 956.5,265.4 962.2,271.7 970.3,267.8"/>
<polygon points="980.7,251.3 986.6,244.8 985.6,242.0 983.8,240.2 979.6,241.4 976.4,246.2 977.1,250.6"/>
<polygon points="839.2,115.4 846.6,123.5 840.8,128.8 835.3,125.6 834.0,118.7 838.6,115.5"/>
<polygon points="834.3,144.7 831.8,137.9 828.7,137.2 824.8,140.3 825.9,145.9 830.9,149.1"/>
<polygon points="975.8,250.9 970.9,254.0 968.5,251.8 969.3,243.3 975.0,246.9"/>
<polygon points="870.5,125.0 877.8,130.5 881.1,129.4 883.4,119.4 883.4,119.4 873.0,117.9 870.5,122.2"/>
<polygon points="896.5,155.2 894.5,154.3 889.1,158.3 892.7,166.8 893.6,167.3 899.1,160.6"/>
<polygon points="878.3,163.2 882.0,168.9 880.7,172.6 873.0,175.4 871.3,172.1 871.8,163.5 872.5,162.3"/>
<polygon points="831.7,181.5 823.1,184.5 821.7,188.9 828.9,192.0 831.2,191.7 831.4,191.5 833.4,184.0"/>
<polygon points="841.5,195.0 832.4,192.7 832.2,192.9 834.1,202.0 839.9,199.9"/>
<polygon points="892.6,282.6 890.1,294.7 896.7,295.7 900.7,292.0 897.0,284.9"/>
<polygon points="972.8,168.9 967.4,172.6 968.2,175.7 975.6,181.3 979.2,177.8 979.4,172.1 976.6,169.1 975.4,168.6"/>
<polygon points="911.9,110.5 918.5,117.8 929.9,110.4 916.7,108.6 911.9,110.3"/>
<polygon points="909.7,203.3 913.5,194.0 912.9,193.5 910.2,193.0 900.0,195.6 900.1,196.2"/>
<polygon points="905.6,280.9 897.4,283.3 893.1,281.6 892.5,280.8 895.7,274.2 907.0,276.3"/>
<polygon points="977.1,282.7 972.8,277.5 964.2,278.5 962.9,281.6 971.4,285.8 975.8,284.9"/>
<polygon points="853.7,265.3 846.1,265.3 839.6,261.3 847.4,251.7 849.0,252.1 854.7,263.1"/>
<polygon points="907.3,155.1 902.2,160.1 900.3,160.0 897.6,154.7 905.4,151.1"/>
<polygon points="947.9,122.8 950.5,117.9 950.8,117.7 952.6,118.1 956.1,120.1 957.3,122.5 955.3,132.0 948.0,129.6"/>
<polygon points="845.1,193.7 854.2,188.0 854.3,188.1 855.2,197.8 850.8,198.7"/>
<polygon points="993.1,281.0 1001.1,286.4 1004.5,284.4 1006.9,279.1 1006.9,278.7 997.6,274.4 993.3,278.7"/>
<polygon points="1011.0,247.7 1010.7,244.3 1014.9,239.8 1029.8,240.3 1013.3,248.8"/>
<polygon points="951.9,175.5 947.2,171.0 941.0,180.1 946.9,182.5 950.1,180.8"/>
<polygon points="887.3,198.5 886.7,192.7 897.8,194.7 898.5,195.9 898.5,196.5 895.4,202.4 894.0,203.4"/>
<polygon points="909.3,205.1 906.3,209.1 896.4,203.3 899.7,196.9 909.1,204.0"/>
<polygon points="830.9,176.6 831.4,180.3 822.8,183.3 817.3,173.2 825.9,170.5"/>
<polygon points="900.4,246.6 898.8,250.9 899.2,253.8 899.9,255.1 911.8,252.6 911.0,248.1 908.1,245.9"/>
<polygon points="933.1,183.1 924.4,173.9 918.9,177.1 918.5,180.2 926.7,188.1 931.0,188.0"/>
<polygon points="932.3,261.6 925.0,265.4 928.7,277.7 933.6,276.3 933.6,276.3 932.5,261.7"/>
<polygon points="840.7,172.8 846.5,179.0 846.9,178.9 854.0,170.2 853.8,168.7 847.2,166.5 841.4,169.8"/>
<polygon points="863.7,192.1 859.3,186.5 855.1,187.9 856.1,197.8 858.3,198.9 863.6,193.4"/>
<polygon points="1008.0,148.9 1008.4,147.5 1011.1,147.6 1021.1,153.0 1012.1,159.2 1010.7,158.5"/>
<polygon points="898.3,236.7 899.8,232.2 898.3,223.0 897.7,222.5 890.5,225.7 894.5,235.9 897.9,237.1"/>
<polygon points="989.5,193.7 988.4,192.0 988.3,191.8 991.1,183.6 996.1,180.8 1000.7,187.9 997.2,193.7"/>
<polygon points="991.9,117.9 996.4,115.9 999.3,111.9 999.8,109.9 999.1,107.7 990.4,102.3 990.1,102.8 991.7,117.8"/>
<polygon points="929.6,125.5 934.1,118.0 939.5,124.2 935.9,135.3 935.7,135.3 930.7,129.3"/>
<polygon points="1005.5,122.2 1011.3,117.8 1015.9,116.4 1017.4,116.8 1009.2,129.9 1005.5,125.2"/>
<polygon points="996.6,258.1 999.5,256.0 1002.7,251.1 999.6,242.2 992.1,247.5"/>
<polygon points="969.9,202.4 967.1,208.8 975.1,209.8 976.7,203.1 976.2,202.2"/>
<polygon points="908.3,227.5 900.9,231.8 899.1,222.7 906.3,223.3"/>
<polygon points="939.0,136.8 940.3,138.2 944.7,140.9 951.0,141.6 956.4,136.9 956.3,135.3 954.9,133.2 947.7,131.1"/>
<polygon points="844.4,194.5 849.8,199.3 846.2,208.6 841.2,200.1 842.7,195.4 844.2,194.5"/>
<polygon points="927.1,288.0 931.9,290.4 936.2,289.8 937.3,281.6 937.0,280.7 933.7,277.9 929.0,279.1 927.4,280.2"/>
<polygon points="942.3,235.4 941.1,227.3 946.1,225.6 950.8,226.9 945.8,235.4"/>
<polygon points="983.0,223.2 992.7,221.7 992.0,215.7 990.1,213.5 987.2,213.2 982.7,216.0 982.4,222.9"/>
<polygon points="965.9,158.5 963.0,157.8 959.7,151.1 963.4,148.0 968.9,155.9"/>
<polygon points="960.3,181.4 958.4,183.9 961.8,187.3 965.8,185.1 963.1,181.3"/>
<polygon points="994.8,203.5 995.7,206.8 1006.6,209.2 1007.1,207.2 1002.2,200.6 1000.2,199.6"/>
<polygon points="930.4,153.3 930.9,153.5 937.3,159.8 932.5,163.9 927.4,159.2"/>
<polygon points="840.4,201.2 834.5,203.2 833.7,204.5 837.6,209.7 845.7,209.9 845.6,209.0"/>
<polygon points="928.9,124.3 933.3,117.0 934.2,112.6 933.2,110.2 930.4,111.1 919.3,118.4 919.8,120.7"/>
<polygon points="909.7,139.2 909.7,144.3 905.7,148.9 896.3,141.5 898.1,139.0 902.5,137.5"/>
<polygon points="1003.7,162.6 1007.9,170.5 998.0,174.6 997.8,174.1 999.6,166.8 1003.5,162.5"/>
<polygon points="976.9,211.9 981.8,214.9 986.5,212.1 984.3,204.5 977.7,203.4 976.2,210.4"/>
<polygon points="939.0,203.6 929.1,206.3 928.0,204.1 932.8,195.3"/>
<polygon points="849.3,143.6 844.3,147.5 840.6,144.3 842.6,136.6 848.2,139.4"/>
<polygon points="934.7,276.8 938.1,279.6 948.3,276.7 949.2,269.4 944.4,268.8 934.7,276.8"/>
<polygon points="854.1,237.0 844.9,236.5 844.0,237.0 841.5,243.5 847.4,250.1 848.9,250.5 856.2,246.3"/>
<polygon points="941.7,203.9 943.1,206.1 949.3,204.3 952.4,200.8 948.1,193.8 946.0,194.5"/>
<polygon points="992.4,281.8 1000.3,287.2 998.2,292.7 989.3,288.4 989.0,285.6"/>
<polygon points="905.1,186.3 906.1,181.9 905.3,180.9 901.2,180.3 897.9,185.1 899.5,189.6"/>
<polygon points="1004.6,162.2 1008.9,170.0 1011.8,170.3 1011.9,170.2 1013.1,164.3 1011.9,160.7 1010.6,160.0"/>
<polygon points="984.7,239.0 984.8,237.4 987.4,231.8 993.3,231.1 994.0,236.2 986.5,240.8"/>
<polygon points="907.2,275.4 896.1,273.0 895.7,267.7 900.6,262.0 903.4,263.6 908.8,274.0"/>
<polygon points="960.2,170.0 960.1,169.7 954.6,163.5 952.5,162.8 947.4,164.0 947.1,165.5 948.0,169.9 952.6,174.3 956.9,173.7"/>
<polygon points="963.5,197.3 962.9,197.3 959.6,201.4 961.6,207.8 963.4,209.6 966.0,208.5 968.6,202.1"/>
<polygon points="980.2,252.8 985.9,262.0 983.6,263.9 972.9,262.0 971.1,259.9 971.5,255.1 976.6,252.0"/>
<polygon points="991.0,117.9 989.5,102.9 981.3,108.8 990.3,117.8"/>
<polygon points="932.0,191.0 931.1,189.2 926.9,189.7 920.2,194.0 923.0,202.2 927.3,203.6 932.1,194.5"/>
<polygon points="950.9,142.9 952.6,149.0 945.3,151.5 944.7,142.1"/>
<polygon points="899.3,237.7 912.0,236.4 912.4,237.4 908.2,244.6 900.4,245.4 898.8,238.1"/>
<polygon points="937.2,240.8 947.7,246.7 938.6,249.5 934.5,243.3 935.6,241.2"/>
<polygon points="878.5,244.0 883.8,247.2 883.9,247.5 880.9,254.7 874.9,253.0 871.2,245.5 872.2,244.7"/>
<polygon points="957.2,137.7 963.9,144.0 962.6,147.0 958.8,149.8 955.8,150.3 953.9,148.9 952.0,142.7"/>
<polygon points="911.2,261.0 904.2,262.2 901.1,260.8 900.1,255.9 912.1,253.4 912.6,253.8 913.3,256.6"/>
<polygon points="946.6,235.7 951.1,240.2 955.2,232.3 952.7,227.2 951.5,227.3"/>
<polygon points="996.6,174.9 996.8,175.4 996.6,177.4 995.8,179.6 990.8,182.1 980.6,178.2 980.9,172.2 988.8,169.4"/>
<polygon points="846.4,180.6 842.6,184.1 844.4,192.9 844.5,193.0 853.8,187.2 846.8,180.5"/>
<polygon points="923.5,292.2 923.9,297.8 931.2,298.2 931.2,291.6 926.6,289.3"/>
<polygon points="1004.5,121.5 1010.6,117.0 1000.5,112.8 997.4,116.7"/>
<polygon points="825.7,231.7 820.0,227.7 830.1,217.4 831.8,217.7 835.3,222.8 833.6,228.3"/>
<polygon points="964.2,196.6 972.7,191.6 976.1,198.0 976.1,201.1 969.8,201.2"/>
<polygon points="977.1,197.2 986.9,192.3 986.9,192.1 975.0,186.6 974.3,187.5 973.6,190.8"/>
<polygon points="836.4,210.4 832.7,205.0 825.1,206.3 826.3,212.0 830.2,215.8 831.8,216.2"/>
<polygon points="950.4,288.1 949.5,283.4 944.6,285.8 944.9,290.5 949.1,289.7"/>
<polygon points="910.1,138.2 903.0,136.3 904.1,124.8 910.6,128.0 911.0,137.4"/>
<polygon points="880.1,146.9 880.6,143.7 886.4,139.0 894.2,142.1 892.3,145.9 882.3,148.2"/>
<polygon points="953.5,200.0 958.4,200.3 962.0,196.4 960.6,194.1 954.1,191.3 949.1,193.0 949.0,193.2"/>
<polygon points="841.3,284.2 838.2,285.0 830.1,278.9 835.8,271.9 841.9,275.5 844.1,281.8"/>
<polygon points="881.7,234.8 888.7,238.1 884.5,246.3 879.3,242.8"/>
<polygon points="890.7,210.0 893.2,204.4 886.6,199.4 882.3,204.7 885.4,211.6"/>
<polygon points="961.4,106.4 968.0,105.7 974.1,109.3 972.1,115.2 965.4,114.1 961.4,107.0"/>
<polygon points="985.0,272.9 984.0,269.2 984.9,264.9 987.0,263.0 994.9,261.5 995.6,262.8 996.6,273.2 992.3,277.7"/>
<polygon points="1011.7,184.3 1009.7,180.9 998.0,178.1 997.2,180.4 1001.8,187.0 1003.2,187.4"/>
<polygon points="874.7,230.0 871.3,220.8 860.6,219.3 860.5,219.7 867.2,231.1 871.9,231.7"/>
<polygon points="815.3,268.4 823.9,273.8 828.9,265.3 825.2,263.0"/>
<polygon points="852.8,297.5 853.8,289.4 847.3,282.6 845.2,282.8 842.4,285.4 850.5,300.9"/>
<polygon points="832.9,119.0 826.2,117.9 827.8,127.9 834.2,125.7"/>
<polygon points="1009.6,268.9 1009.2,274.4 1007.3,277.8 998.0,273.5 996.8,262.9"/>
<polygon points="872.2,190.1 872.9,195.1 869.4,197.8 865.2,193.4 865.3,192.2 871.0,189.7"/>
<polygon points="981.4,252.3 986.9,261.6 994.9,260.2 995.7,258.4 991.2,247.9 987.6,245.6"/>
<polygon points="938.3,160.9 933.4,164.7 932.7,167.6 936.0,170.5 945.6,165.1 945.9,163.6 943.2,161.0"/>
<polygon points="974.1,156.9 982.7,155.4 984.2,156.1 977.2,167.6 975.9,167.1"/>
<polygon points="927.2,144.9 935.6,136.8 935.9,136.8 937.8,137.4 938.9,138.8 937.7,149.4 931.0,151.9 930.5,151.7 926.9,146.2"/>
<polygon points="942.5,236.7 937.7,240.2 948.2,246.2 949.3,246.4 950.9,242.7 950.3,241.1 946.0,236.9"/>
<polygon points="919.7,277.4 915.9,273.7 918.3,267.5 921.6,265.6 924.1,265.7 927.9,278.0 926.3,279.1"/>
<polygon points="918.1,227.2 915.1,218.8 910.3,218.0 907.6,222.9 909.6,227.1 913.6,229.7"/>
<polygon points="911.9,137.4 917.9,136.5 919.5,132.9 916.3,125.9 911.6,127.8"/>
<polygon points="918.7,228.4 921.4,228.6 924.5,232.2 920.3,241.6 913.7,236.7 913.4,235.7 914.4,231.0"/>
<polygon points="1000.4,241.8 1000.7,240.7 1003.9,239.0 1009.1,244.3 1009.7,247.7 1003.6,250.3"/>
<polygon points="962.1,251.6 958.7,253.7 957.5,263.2 969.6,259.6 970.0,254.9 967.3,252.8"/>
<polygon points="944.8,213.8 943.0,209.7 943.3,207.2 949.4,205.7 952.7,210.8 951.4,214.3"/>
<polygon points="906.0,281.8 898.0,284.4 901.7,291.5 905.6,291.8 906.5,282.8"/>
<polygon points="1011.9,258.5 1014.2,255.4 1012.4,250.1 1010.2,248.9 1004.2,251.4 1000.5,256.5"/>
<polygon points="910.7,204.8 916.3,206.3 921.8,202.7 919.0,194.7 914.4,194.6 910.6,203.7"/>
<polygon points="925.9,147.2 929.4,152.7 926.2,158.8 921.2,161.5 918.0,154.6 919.7,150.7"/>
<polygon points="998.1,166.3 989.8,156.8 989.3,168.3 997.0,174.0"/>
<polygon points="870.6,188.6 867.9,181.7 861.7,183.0 860.0,185.8 864.6,191.2"/>
<polygon points="842.4,154.9 843.3,153.8 843.4,148.5 839.7,145.4 835.4,145.7 831.9,149.9 832.0,150.4"/>
<polygon points="911.2,139.3 911.2,144.4 918.9,149.4 925.4,146.2 925.6,144.9 918.2,138.0 912.1,138.6"/>
<polygon points="997.2,225.3 994.0,221.7 993.3,216.0 1004.0,215.0"/>
<polygon points="920.9,264.3 919.3,258.3 914.5,257.1 912.6,261.6 917.7,266.1"/>
<polygon points="950.9,116.2 949.4,92.2 960.0,106.2 959.9,106.8 952.9,116.5"/>
<polygon points="859.9,220.0 857.7,223.1 856.3,234.6 862.9,234.8 866.5,231.6"/>
<polygon points="1014.6,186.0 1010.5,193.8 1007.3,193.0 1003.9,188.3 1012.1,185.1"/>
<polygon points="951.8,287.8 959.5,288.7 959.5,288.6 961.1,282.2 951.3,280.6 950.5,283.0"/>
<polygon points="966.4,162.4 961.6,169.6 961.7,169.9 966.4,171.8 971.8,168.1"/>
<polygon points="952.0,161.4 946.9,162.7 944.4,159.9 944.7,153.7 945.4,152.8 952.8,150.1 954.8,151.5"/>
<polygon points="934.9,227.0 930.8,222.0 933.2,218.3 937.0,220.0 939.0,226.0"/>
<polygon points="914.7,193.1 919.1,193.2 926.0,188.9 917.8,180.8 914.1,183.8 914.2,192.5"/>
<polygon points="850.0,301.2 841.7,285.7 838.4,286.6 834.4,293.6 835.3,296.5 849.7,303.5"/>
<polygon points="893.3,127.1 884.4,119.7 882.3,129.7 885.3,131.6 892.5,129.4"/>
<polygon points="952.9,161.4 955.6,151.8 958.8,151.3 961.9,158.3 955.1,162.0"/>
<polygon points="963.8,195.8 963.2,195.8 962.1,193.5 962.4,188.6 966.5,186.2 972.9,187.4 972.0,190.8"/>
<polygon points="959.0,180.6 957.3,183.2 956.3,183.5 951.4,181.2 953.0,175.8 957.1,175.2"/>
<polygon points="897.7,254.3 897.3,251.2 885.1,248.2 882.0,255.3 882.0,255.3 885.9,257.5"/>
<polygon points="914.8,256.0 914.0,253.3 924.6,248.9 924.8,250.7 919.7,256.9"/>
<polygon points="859.8,276.9 856.9,275.6 847.9,281.8 854.7,288.5 860.2,286.5"/>
<polygon points="1006.5,214.3 1007.8,212.2 1019.0,218.1 1014.7,223.6 1008.6,224.2"/>
<polygon points="929.5,210.4 929.4,207.0 939.3,204.3 940.4,204.8 941.9,206.9 941.4,209.3 932.6,212.8"/>
</g>
<path d="M862.1,141.6L872.4,156.4L890.2,174.2" fill="none" stroke="#efece2" stroke-width="3" stroke-linecap="round"/>
<path d="M833.9,177.2L857.6,160.9L872.4,156.4" fill="none" stroke="#efece2" stroke-width="1.6"/>
<g fill="#cdf8b4" stroke="#86c436" stroke-width="0.7" stroke-linejoin="round">
<polygon points="941.9,137.2 964.9,140.9 978.2,160.9 985.6,177.2 990,189 996.7,204 989.4,216.5 980.2,222.9 963.7,233.9 956.4,231.2 974.7,218.3 983,211 974.7,201.8 964.9,204 961.9,193.5 956,171.3 960.4,168.3 960.4,157.9 947.1,156.4 951.6,150.5"/>
<polygon points="914,136 924,131 936,132 943,140 945,150 941,160 937,172 934,182 920,182 914,172"/>
<polygon points="833.2,147.6 839.1,146.8 839.9,155.0 833.9,155.7"/>
<polygon points="839.9,149.0 848.7,150.5 850.2,160.9 841.3,166.1"/>
<polygon points="851.0,145.3 855.4,144.6 857.6,151.3 853.2,152.7"/>
<polygon points="846.5,180.1 873.9,175.0 875.4,177.2 871.0,190.5 847.3,192.7"/>
<polygon points="898.4,120.1 903.6,120.1 903.6,126.1 899.1,126.1"/>
<polygon points="999.0,181.6 1003.4,178.7 1003.4,195.0 996.7,195.0"/>
<polygon points="861.0,247.7 870.2,246.8 870.6,250.4 861.4,251.4"/>
<polygon points="981.2,267.9 989.4,264.2 990.3,275.2 983.9,277.0"/>
<polygon points="908.7,277.0 927.1,282.5 928.0,287.1 908.7,287.1"/>
<polygon points="954.6,229.3 960.1,232.1 961.9,234.9 956.4,233.9"/>
</g>
<g fill="#dbdbdb" stroke="#4c4c4c" stroke-width="0.8">
<polygon points="945.6,159.4 960.4,157.9 960.4,168.3 956.0,171.3 944.1,169.8"/>
<polygon points="944.1,171.3 955.3,171.3 961.2,193.5 953.8,195.0 953.0,177.2 944.1,177.2"/>
</g>
<g fill="none" stroke="#a8cc58" stroke-width="0.8">
<path d="M941.9,137.2L951.6,150.5L947.1,156.4"/>
<path d="M964.9,140.9L948.6,156.4"/>
<path d="M963.4,194.2L985.6,194.2L990.1,189.0"/>
<path d="M985.6,177.2L975.3,195.0L975.3,203.9"/>
</g>
<polygon points="916.7,156.4 916.0,143.1 921.9,134.2 932.3,134.2 942.7,146.1 938.2,156.4 932.3,163.9 930.1,174.2 927.1,160.9 921.9,159.4" fill="#8fd28f"/>
<polygon points="924.9,156.4 926.7,146.8 930.5,148.3 930.2,155.0 927.9,160.9" fill="#cdf8b4"/>
<g fill="none" stroke="#2f8f2f" stroke-width="1.7" stroke-linecap="round" stroke-linejoin="round">
<path d="M916.7,156.4L916.0,143.1L921.9,134.2L932.3,134.2L942.7,146.1L938.2,156.4L932.3,163.9L930.1,174.2"/>
<path d="M919.7,155.0L920.4,143.9L926.4,139.4L934.5,143.9L935.3,153.5L930.8,162.4"/>
<path d="M924.1,152.0L926.4,145.3L930.8,146.8L930.8,155.0L927.9,160.9"/>
</g>
<g fill="none" stroke="#58b058" stroke-width="1.1">
<path d="M918.2,149.0L924.1,137.2L933.8,137.9L939.7,149.0L935.3,159.4"/>
</g>
<g fill="none" stroke="#86b82e" stroke-width="0.8">
<path d="M917.5,160.9L921.9,171.3L927.1,180.1L928.6,168.3L932.3,177.2L934.5,168.3"/>
<path d="M921.9,156.4L924.1,168.3L926.4,177.2"/>
</g>
<polygon points="924.9,183.1 935.3,183.1 932.3,188.3 928.6,189.0" fill="#d6c08a"/>
<path d="M886.5,115.0L891.0,129.8L893.9,141.6L902.1,160.9L907.3,175.7L908.7,189.0L910.2,200.0L910.5,223.8L907.2,255.0L906.0,288.0L905.8,291.7" fill="none" stroke="#86bc34" stroke-width="7"/>
<path d="M886.5,115.0L891.0,129.8L893.9,141.6L902.1,160.9L907.3,175.7L908.7,189.0L910.2,200.0L910.5,223.8L907.2,255.0L906.0,288.0L905.8,291.7" fill="none" stroke="#4b86f0" stroke-width="5.2"/>
<path d="M886.5,115.0L891.0,129.8L893.9,141.6L902.1,160.9L907.3,175.7L908.7,189.0L910.2,200.0L910.5,223.8L907.2,255.0L906.0,288.0L905.8,291.7" fill="none" stroke="#97d9f1" stroke-width="4.2"/>
<path d="M867.4,205.5L861.9,216.5L859.2,229.3L861.0,244.0L862.9,255.0" fill="none" stroke="#4b6fe0" stroke-width="1" stroke-dasharray="3 2"/>
</svg>
<svg style="left:828px;top:112px" width="181" height="181" viewBox="828 112 181 181"><rect x="832.5" y="116.5" width="172" height="172" fill="none" stroke="#8a8a8a" stroke-width="1"/><rect x="885.5" y="182.5" width="57" height="40" fill="rgba(255,80,80,0.35)" stroke="#f00a14" stroke-width="2"/><line x1="913.5" y1="112" x2="913.5" y2="293" stroke="#f00a14" stroke-width="1"/><line x1="828" y1="202.5" x2="1009" y2="202.5" stroke="#f00a14" stroke-width="1"/><rect x="828" y="278" width="16.5" height="15" fill="#fff"/><path d="M831 281.5H839.5V290" fill="none" stroke="#8c8c8c" stroke-width="2.2"/></svg>
<div style="left:983px;top:299px;width:31px;height:20px;background:#fff;border:1px solid #d5d5d5;box-sizing:border-box;"></div>
<svg style="left:990px;top:301px" width="16" height="16" viewBox="0 0 16 16"><g fill="#8a8a8a"><rect x="6.3" y="1" width="3.4" height="14" rx="1"/><rect x="2.5" y="3.5" width="11" height="2" rx="1"/><rect x="2.5" y="10.5" width="11" height="2" rx="1"/></g></svg>
<div style="left:983px;top:597px;width:31px;height:24px;background:#fff;border:1px solid #d5d5d5;box-sizing:border-box;"></div>
<svg style="left:990px;top:601px" width="16" height="16" viewBox="0 0 16 16"><circle cx="8" cy="8" r="6.2" fill="#fff" stroke="#8a8a8a" stroke-width="1.6"/><path d="M8 4.2V8.3H11.6" fill="none" stroke="#8a8a8a" stroke-width="1.5"/></svg>
<div id="chartwin" style="left:624px;top:347px;width:356px;height:228px;background:#fff;border:1px solid #6a9fe0;box-sizing:border-box;"></div>
<div style="left:625px;top:348px;width:354px;height:23px;background:#e2e2e2;"></div>
<div style="left:625px;top:371px;width:354px;height:1px;background:#cfcfcf;"></div>
<span class="t " style="left:634.5px;top:355px;font-size:12px;transform:scaleX(0.9150);color:#444;">Chart II</span>
<svg style="left:930px;top:350px" width="48" height="16" viewBox="930 350 48 16"><rect x="933.5" y="360.5" width="7" height="2" fill="#8a8a8a"/><path d="M949.5 356.5V354.5H957.5V360.5H955.5" fill="none" stroke="#8a8a8a" stroke-width="1.2"/><rect x="947.5" y="357" width="7.5" height="6" fill="#e2e2e2" stroke="#8a8a8a" stroke-width="1.2"/><rect x="947.5" y="356.6" width="7.5" height="1.6" fill="#8a8a8a"/><circle cx="968.4" cy="357.5" r="5.6" fill="#9a9a9a"/><path d="M966.1 355.2L970.7 359.8M970.7 355.2L966.1 359.8" stroke="#fff" stroke-width="1.5"/></svg>
<div style="left:963px;top:372px;width:16px;height:202px;background:#f0f0f0;"></div>
<div style="left:963px;top:389px;width:15px;height:64px;background:#c9c9c9;"></div>
<svg style="left:963px;top:374px" width="16" height="14" viewBox="0 0 16 14"><path d="M4.2 9.2L8 5.4L11.8 9.2" fill="none" stroke="#505050" stroke-width="1.7"/></svg>
<svg style="left:963px;top:558px" width="16" height="16" viewBox="0 0 16 16"><path d="M13.5 5.5V13.5H5.5Z" fill="#7a7a7a"/></svg>
<div style="left:709px;top:390px;width:36px;height:10.5px;background:#ff0000;"></div>
<span class="t " style="left:750.2px;top:389.25px;font-size:11.5px;transform:scaleX(0.9511);color:#666;">Notfall</span>
<div style="left:791px;top:390px;width:36px;height:10.5px;background:#00dd00;"></div>
<span class="t " style="left:831.3px;top:389.25px;font-size:11.5px;transform:scaleX(0.9488);color:#666;">Verkehr</span>
<svg style="left:728px;top:410px" width="130" height="130" viewBox="728 410 130 130"><path d="M793.3 412.2A62.6 62.6 0 0 1 793.3 537.4Z" fill="#ff0000"/><path d="M793.3 412.2A62.6 62.6 0 0 0 793.3 537.4Z" fill="#00dd00"/><line x1="793.3" y1="411" x2="793.3" y2="538.5" stroke="#fff" stroke-width="1.6"/></svg>
<div style="left:0px;top:0px;width:1014px;height:28px;background:#fff;"></div>
<div style="left:586px;top:0px;width:428px;height:27.5px;background:#e1e1e1;"></div>
<div style="left:15px;top:27px;width:420px;height:1px;background:#d6d6d6;"></div>
<div style="left:434px;top:0;width:127px;height:28px;background:#fff;border:1px solid #d6d6d6;border-bottom:none;border-right-color:#fafafa;box-sizing:border-box;"></div>
<span class="t " style="left:13.3px;top:9px;font-size:12px;transform:scaleX(0.7976);color:#444;">TIEREN</span>
<span class="t " style="left:65.2px;top:9px;font-size:12px;transform:scaleX(0.8413);color:#444;">ZEICHNEN</span>
<span class="t " style="left:132.3px;top:9px;font-size:12px;transform:scaleX(0.8540);color:#444;">DATEN HINZUFÜGEN</span>
<span class="t " style="left:252.0px;top:9px;font-size:12px;transform:scaleX(0.8445);color:#444;">AUSGABE</span>
<span class="t " style="left:316.2px;top:9px;font-size:12px;transform:scaleX(0.8015);color:#444;">EDITIEREN</span>
<span class="t " style="left:383.0px;top:9px;font-size:12px;transform:scaleX(0.7839);color:#444;">ANALYSE</span>
<span class="t " style="left:443.2px;top:9px;font-size:12px;transform:scaleX(0.8157);color:#0e72c8;">WEITERE WERKZEUGE</span>
<div style="left:3px;top:2px;width:13px;height:24px;background:#fff;"></div>
<svg style="left:0;top:0" width="590" height="28" viewBox="0 0 590 28"><circle cx="9.7" cy="10" r="5" fill="#fff" stroke="#b4b4b4" stroke-width="1.1"/><path d="M7.5 10L11.1 7.4L11.1 12.6Z" fill="#8f8f8f"/><circle cx="567.4" cy="10.5" r="5" fill="#fff" stroke="#b4b4b4" stroke-width="1.1"/><path d="M569.6 10.5L566 7.9L566 13.1Z" fill="#8f8f8f"/><circle cx="580.7" cy="10.5" r="5" fill="#fff" stroke="#b4b4b4" stroke-width="1.1"/><path d="M580.7 12.7L578.1 9.1L583.3 9.1Z" fill="#8f8f8f"/></svg>
<div style="left:595px;top:0px;width:142px;height:24px;background:#c6d6f1;"></div>
<span class="t " style="left:625.8px;top:6px;font-size:12px;transform:scaleX(0.9169);color:#444;">Sichtbare Themen</span>
<svg style="left:590px;top:0" width="424" height="28" viewBox="590 0 424 28">
<g><path d="M600.5 5.5H614.5V16.5H605.5L602.5 19.5V16.5H600.5Z" fill="#fff" stroke="#777" stroke-width="1"/><rect x="606.8" y="8.6" width="1.8" height="5.6" fill="#d04020"/><rect x="606.8" y="6.4" width="1.8" height="1.6" fill="#d04020"/><rect x="600.3" y="18.7" width="4.4" height="0.9" fill="#999"/></g>
<path d="M722.5 10.5H730.5L726.5 14.5Z" fill="#222"/>
<g><circle cx="751.9" cy="12" r="7.2" fill="#2a3f9e"/><path d="M746.5 7L757.3 17M757.3 7L746.5 17" stroke="#fff" stroke-width="2.2"/><path d="M746.5 7L757.3 17M757.3 7L746.5 17" stroke="#d8202c" stroke-width="0.9"/><path d="M751.9 4.8V19.2M744.7 12H759.1" stroke="#fff" stroke-width="3.6"/><path d="M751.9 4.8V19.2M744.7 12H759.1" stroke="#d8202c" stroke-width="2"/><circle cx="751.9" cy="12" r="7.2" fill="none" stroke="#2a3f9e" stroke-width="1.4"/></g>
<g><clipPath id="cpde"><circle cx="774.4" cy="12" r="6.4"/></clipPath><circle cx="774.4" cy="12" r="7.2" fill="#2a3f9e"/><g clip-path="url(#cpde)"><rect x="767" y="5" width="15" height="4.8" fill="#111"/><rect x="767" y="9.8" width="15" height="4.4" fill="#e02020"/><rect x="767" y="14.2" width="15" height="5" fill="#f6c800"/></g></g>
<g><clipPath id="cpae"><circle cx="798" cy="12" r="6.4"/></clipPath><circle cx="798" cy="12" r="7.2" fill="#2a3f9e"/><g clip-path="url(#cpae)"><rect x="791" y="5" width="15" height="4.8" fill="#1a8a3a"/><rect x="791" y="9.8" width="15" height="4.4" fill="#fff"/><rect x="791" y="14.2" width="15" height="5" fill="#111"/><rect x="791" y="5" width="4.6" height="15" fill="#d8202c"/></g></g>
<g><circle cx="823.6" cy="12" r="7.2" fill="#2e6fbe"/><path d="M827.2 9.6A4.3 4.3 0 1 0 827.2 14.4" fill="none" stroke="#fff" stroke-width="3"/></g>
<g><circle cx="849" cy="12" r="7.2" fill="#2e6fbe"/><path d="M846.4 9.8A2.7 2.7 0 1 1 849.6 12.2Q849 12.6 849 14" fill="none" stroke="#fff" stroke-width="1.9"/><rect x="848" y="15" width="2" height="2" fill="#fff"/></g>
<g fill="none" stroke="#3f7ec6" stroke-width="2.1" stroke-linejoin="round"><path d="M873.6 10.4L877.2 6.8A2.7 2.7 0 0 1 881.2 10.8L877.6 14.4A2.7 2.7 0 0 1 873.6 10.4Z"/><path d="M869.2 14.2L872.8 10.6A2.7 2.7 0 0 1 876.8 14.6L873.2 18.2A2.7 2.7 0 0 1 869.2 14.2Z"/></g>
<g><path d="M894.6 5.6H906.6L908.4 7.4V19.4H894.6Z" fill="#3f7ec6" stroke="#3f7ec6" stroke-width="1.3"/><rect x="896.6" y="6" width="9.6" height="6.4" fill="#fff"/><path d="M897.6 8H905.2M897.6 10.2H905.2" stroke="#9bb8dc" stroke-width="0.9"/><rect x="897.4" y="14.6" width="8" height="4.8" fill="#e8eef8"/><rect x="898.6" y="15.2" width="2.6" height="3.6" fill="#3f7ec6"/></g>
<g><circle cx="926.5" cy="12" r="4.4" fill="none" stroke="#3f7ec6" stroke-width="2.4"/><g stroke="#3f7ec6" stroke-width="2.6"><path d="M926.5 4.3V6.8M926.5 17.2V19.7M918.8 12H921.3M931.7 12H934.2M921.1 6.6L922.8 8.3M930.2 15.7L931.9 17.4M921.1 17.4L922.8 15.7M930.2 8.3L931.9 6.6"/></g></g>
<path d="M938 10.5H944.4L941.2 14Z" fill="#222"/>
<g><circle cx="966.3" cy="12" r="7.3" fill="#d8492e"/><path d="M963.6 9.4A4 4 0 1 0 969 9.4" fill="none" stroke="#fff" stroke-width="1.6"/><path d="M966.3 7.2V12" stroke="#fff" stroke-width="1.6"/></g>
<path d="M987.2 14.2L991.9 9.6L996.6 14.2" fill="none" stroke="#7a7a7a" stroke-width="2.4"/>
<rect x="999" y="9" width="1" height="6" fill="#7ea6e0"/>
</svg>
<div style="left:3px;top:28px;width:1010px;height:79px;background:#fff;"></div>
<div style="left:3px;top:106px;width:1010px;height:1px;background:#dcdcdc;"></div>
<div style="left:472px;top:32px;width:1px;height:71px;background:#dddddd;"></div>
<svg style="left:0;top:28px" width="480" height="40" viewBox="0 28 480 40">
<g><clipPath id="cpk"><rect x="27" y="33" width="28.6" height="28.6"/></clipPath><rect x="27" y="33" width="14" height="28.6" fill="#bfbfbf"/><rect x="41" y="33.5" width="14" height="27.6" fill="#6a6a6a"/><g clip-path="url(#cpk)"><path d="M30.5 32.5L56 57.5" stroke="#fff" stroke-width="2.4"/><path d="M26 44.5L40 58" stroke="#fff" stroke-width="2.2"/><path d="M37.5 62L48.5 50.5" stroke="#fff" stroke-width="2.2"/></g><rect x="41" y="33.6" width="14.2" height="27.6" fill="none" stroke="#f1b76c" stroke-width="1.2"/></g>
<g><path d="M105 33.2H134" stroke="#b7d3df" stroke-width="0.7"/><path d="M128.1 46.2A10.65 10.65 0 1 0 117.8 57.15" fill="none" stroke="#d2482e" stroke-width="2.8"/><path d="M125.9 47.5V61M119.2 54.4H132.7" stroke="#2f6fb7" stroke-width="3"/></g>
<path d="M196.68 40.49A12.5 12.5 0 1 0 196.68 54.11L190.94 51.45A6.3 6.3 0 1 1 190.94 43.15Z" fill="#3f7cc0"/>
<path d="M250.58 40.49A12.5 12.5 0 1 0 250.58 54.11L244.84 51.45A6.3 6.3 0 1 1 244.84 43.15Z" fill="#3f7cc0"/>
<g><path d="M288.7 47.8L299.5 58.2L314.6 49V51.6L299.5 61.6L288.7 50.7Z" fill="#3f7cc0"/><path d="M288.7 44.2L302.5 35.8Q313.5 36 314.6 45L299.5 55.2Z" fill="#c2c2c2" stroke="#9a9a9a" stroke-width="0.6"/><path d="M296 46.5L306.2 39.6L313.6 44.2M306.2 39.6L304.6 36.4" fill="none" stroke="#fff" stroke-width="1.7"/><path d="M292.9 38.1L295.5 33.9L297.8 34.7L300.5 39.7V44.8L297.8 47.8L294.1 44.8Z" fill="#4a7fc0" stroke="#d2452c" stroke-width="1.2" stroke-linejoin="round"/><path d="M295.5 34.2L296.6 41.4L297.8 47.4M296.6 41.4L300.4 39.8" fill="none" stroke="#d2452c" stroke-width="0.8"/></g>
<g><rect x="351.2" y="33" width="28.8" height="29" fill="#3fa377"/><path d="M364.4 37.4L375 57L363.7 51.6L354.9 46L361.6 43.2Z" fill="none" stroke="#fff" stroke-width="1.8" stroke-linejoin="miter"/><path d="M361.6 43.2L363.7 51.6M364.4 37.4L366.6 47.4L363.7 51.6" fill="none" stroke="#fff" stroke-width="0.9"/></g>
<g><rect x="420.6" y="46.8" width="14" height="14.6" fill="#bdbdbd" stroke="#777" stroke-width="1.2"/><path d="M421.4 48L434 60.6M422 61L434 48" stroke="#e6e6e6" stroke-width="1.5"/><path d="M430.5 33.5H447.5V45.5H436.5L431.5 50V45.5H430.5Z" fill="#fff" stroke="#3a78bf" stroke-width="1.2"/><rect x="437.7" y="39.2" width="2.2" height="5.2" fill="#d04020"/><rect x="437.7" y="36.2" width="2.2" height="2" fill="#d04020"/></g>
</svg>
<span class="t " style="left:29.5px;top:65px;font-size:12px;transform:scaleX(0.8717);color:#444;">Karte</span>
<span class="t " style="left:13.8px;top:80px;font-size:12px;transform:scaleX(0.9761);color:#444;">überlagern</span>
<span class="t " style="left:107.8px;top:65px;font-size:12px;transform:scaleX(0.8230);color:#444;">Kreis</span>
<span class="t " style="left:96.5px;top:80px;font-size:12px;transform:scaleX(0.9369);color:#444;">zeichnen</span>
<span class="t " style="left:169.9px;top:65px;font-size:12px;transform:scaleX(0.9025);color:#444;">Chart I</span>
<span class="t " style="left:222.5px;top:65px;font-size:12px;transform:scaleX(0.9150);color:#444;">Chart II</span>
<span class="t " style="left:274.0px;top:65px;font-size:12px;transform:scaleX(0.8900);color:#444;">PlexMap3D</span>
<span class="t " style="left:343.0px;top:65px;font-size:12px;transform:scaleX(0.9540);color:#444;">Mapillary</span>
<span class="t " style="left:415.7px;top:65px;font-size:12px;transform:scaleX(0.9503);color:#444;">MapTip</span>
<span class="t " style="left:401.4px;top:80px;font-size:12px;transform:scaleX(0.9584);color:#444;">aktivieren/...</span>
<span class="t " style="left:806.2px;top:63px;font-size:12px;transform:scaleX(0.8555);color:#444;">SynerGIS</span>
<span class="t " style="left:954.6px;top:63px;font-size:12px;transform:scaleX(0.8420);color:#444;">Esri</span>
<div style="left:3px;top:107px;width:269px;height:514px;background:#fff;"></div>
<div style="left:272px;top:141px;width:1px;height:480px;background:#c8c8c8;"></div>
<div style="left:273px;top:107px;width:29px;height:35px;background:#fff;"></div>
<div style="left:272px;top:141px;width:30px;height:1px;background:#d9d9d9;"></div>
<div style="left:301px;top:107px;width:1px;height:35px;background:#e4e4e4;"></div>
<svg style="left:281px;top:116px" width="16" height="18" viewBox="0 0 16 18"><path d="M10.8 4.4L6.2 9L10.8 13.6" fill="none" stroke="#666" stroke-width="2.5"/></svg>
<span class="t " style="left:7.0px;top:118px;font-size:12px;transform:scaleX(0.9506);color:#444;">Projekt</span>
<svg style="left:46px;top:118px" width="12" height="12" viewBox="0 0 12 12"><circle cx="6" cy="6" r="5.3" fill="#2f6fb7"/><rect x="5" y="5" width="2" height="4.4" fill="#fff"/><circle cx="6" cy="3.2" r="1.1" fill="#fff"/></svg>
<span class="t " style="left:7.5px;top:138px;font-size:12px;transform:scaleX(0.9530);color:#444;">Ansicht</span>
<div class="box" style="left:7px;top:151px;width:262px;height:20px;"></div>
<span class="t " style="left:19.3px;top:156px;font-size:12px;transform:scaleX(0.9763);color:#444;">Sehenswürdigkeiten</span>
<span class="t " style="left:7.5px;top:178px;font-size:12px;transform:scaleX(0.9790);color:#444;">Grundkarten</span>
<div class="box" style="left:7px;top:191px;width:262px;height:21px;"></div>
<span class="t " style="left:10.5px;top:196px;font-size:12px;transform:scaleX(0.9664);color:#444;">Stadtplan</span>
<span class="t " style="left:7.0px;top:218px;font-size:12px;transform:scaleX(0.9474);color:#444;">Kartenausschnitte</span>
<div class="box" style="left:7px;top:231px;width:262px;height:21px;"></div>
<span class="t " style="left:7.0px;top:258px;font-size:12px;transform:scaleX(0.9164);color:#444;">Maßstab 1:</span>
<div class="box" style="left:7px;top:271px;width:262px;height:21px;"></div>
<span class="t " style="left:10.5px;top:276px;font-size:12px;transform:scaleX(0.8992);color:#444;">4,514</span>
<div class="arr" style="left:254px;top:159px;"></div>
<div class="arr" style="left:254px;top:199px;"></div>
<div class="arr" style="left:254px;top:239px;"></div>
<div class="arr" style="left:254px;top:279px;"></div>
<div class="arr" style="left:254px;top:333px;"></div>
<div style="left:3px;top:301px;width:269px;height:1px;background:#d0d0d0;"></div>
<div style="left:23px;top:302px;width:1px;height:18px;background:#d0d0d0;"></div>
<div style="left:74px;top:302px;width:1px;height:18px;background:#d0d0d0;"></div>
<div style="left:157px;top:302px;width:1px;height:18px;background:#d0d0d0;"></div>
<div style="left:212px;top:302px;width:1px;height:18px;background:#d0d0d0;"></div>
<div style="left:251px;top:302px;width:1px;height:18px;background:#d0d0d0;"></div>
<div style="left:74px;top:319px;width:157px;height:1px;background:#d0d0d0;"></div>
<span class="t " style="left:27.5px;top:305px;font-size:12px;transform:scaleX(0.8387);color:#0e72c8;">SUCHEN</span>
<span class="t " style="left:78.0px;top:305px;font-size:12px;transform:scaleX(0.8789);color:#444;">THEMENBAUM</span>
<span class="t " style="left:162.0px;top:305px;font-size:12px;transform:scaleX(0.8195);color:#444;">LEGENDE</span>
<span class="t " style="left:217.0px;top:305px;font-size:12px;transform:scaleX(0.7815);color:#444;">TH</span>
<svg style="left:0;top:300px" width="272" height="24" viewBox="0 300 272 24"><circle cx="13.7" cy="311.2" r="5" fill="#fff" stroke="#b4b4b4" stroke-width="1.1"/><path d="M11.5 311.2L15.1 308.6L15.1 313.8Z" fill="#8f8f8f"/><circle cx="241.5" cy="311.4" r="5" fill="#fff" stroke="#b4b4b4" stroke-width="1.1"/><path d="M243.7 311.4L240.1 308.8L240.1 314Z" fill="#8f8f8f"/><circle cx="262.2" cy="311.4" r="5" fill="#fff" stroke="#b4b4b4" stroke-width="1.1"/><path d="M262.2 313.6L259.6 310L264.8 310Z" fill="#8f8f8f"/></svg>
<div class="box" style="left:7px;top:325px;width:262px;height:20px;"></div>
<span class="t " style="left:10.5px;top:330px;font-size:12px;transform:scaleX(0.9772);color:#444;">- Auswahl -</span>
<div style="left:3px;top:354px;width:269px;height:1px;background:#c9c9c9;"></div>
<div style="left:3px;top:620px;width:1010px;height:1px;background:#b9b9b9;"></div>
<div style="left:0px;top:0px;width:2px;height:621px;background:#dadada;"></div>
<div style="left:2px;top:0px;width:1px;height:621px;background:#1c80dc;"></div>
<div style="left:1013px;top:0px;width:1px;height:621px;background:#1c80dc;"></div>
</div></body></html>
